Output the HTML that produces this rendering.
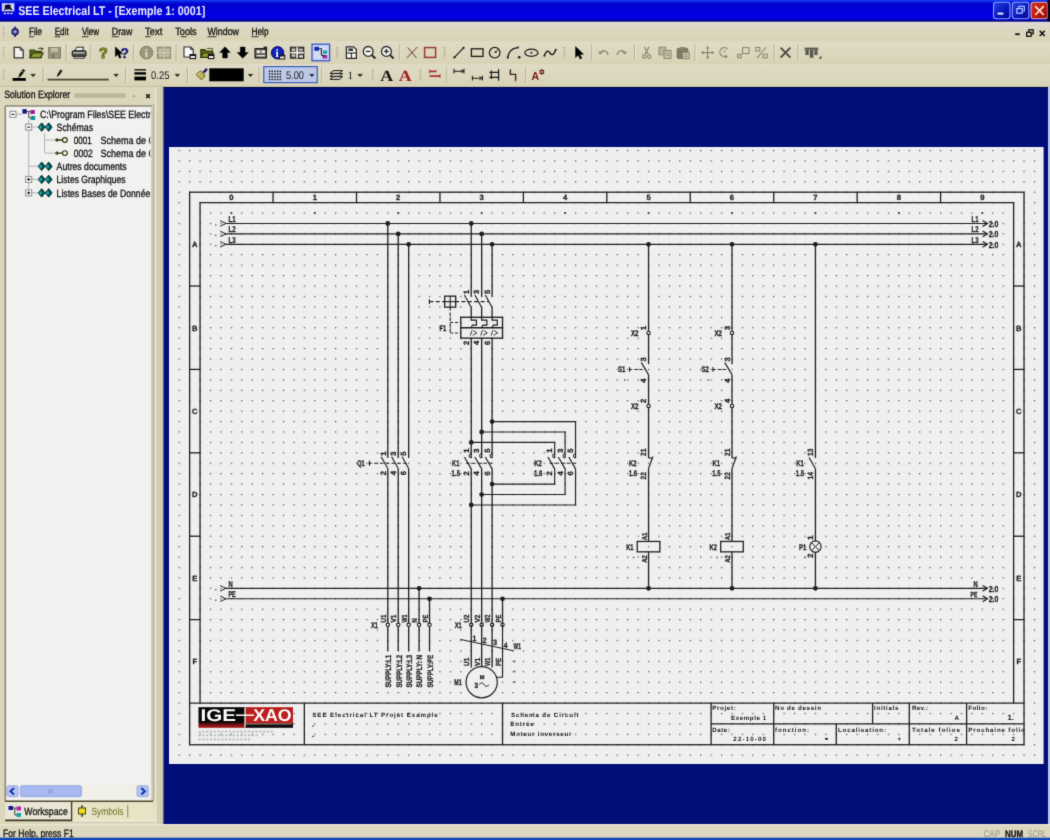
<!DOCTYPE html>
<html><head><meta charset="utf-8"><title>SEE Electrical LT</title>
<style>
html,body{margin:0;padding:0;background:#dbd6bc;overflow:hidden}
svg{display:block;font-family:"Liberation Sans",sans-serif;opacity:.999;will-change:transform}
</style></head><body>
<svg width="1050" height="840" viewBox="0 0 1050 840" text-rendering="geometricPrecision">
<filter id="soft" x="0" y="0" width="100%" height="100%" filterUnits="objectBoundingBox" color-interpolation-filters="sRGB"><feConvolveMatrix order="3" kernelMatrix="0.0144 0.0912 0.0144 0.0912 0.5776 0.0912 0.0144 0.0912 0.0144" divisor="1" edgeMode="duplicate" preserveAlpha="true"/></filter>
<g filter="url(#soft)">
<defs><linearGradient id="tb" x1="0" y1="0" x2="0" y2="1"><stop offset="0" stop-color="#1848f4"/><stop offset="0.09" stop-color="#0818e0"/><stop offset="0.2" stop-color="#0000cc"/><stop offset="0.75" stop-color="#0000e6"/><stop offset="0.9" stop-color="#0000c8"/><stop offset="0.96" stop-color="#000078"/><stop offset="1" stop-color="#000070"/></linearGradient><linearGradient id="bb" x1="0" y1="0" x2="1" y2="1"><stop offset="0" stop-color="#2446e0"/><stop offset="0.55" stop-color="#0818c0"/><stop offset="1" stop-color="#000890"/></linearGradient><linearGradient id="rb" x1="0" y1="0" x2="1" y2="1"><stop offset="0" stop-color="#cc3420"/><stop offset="0.5" stop-color="#c01c0c"/><stop offset="1" stop-color="#8c0c04"/></linearGradient><linearGradient id="mb" x1="0" y1="0" x2="0" y2="1"><stop offset="0" stop-color="#dcdcdc"/><stop offset="0.25" stop-color="#dcd8c4"/><stop offset="1" stop-color="#d9d4b4"/></linearGradient><linearGradient id="tg" x1="0" y1="0" x2="0" y2="1"><stop offset="0" stop-color="#dfdbc6"/><stop offset="1" stop-color="#d8d3b6"/></linearGradient></defs>
<rect x="0.00" y="0.00" width="1050.00" height="840.00" fill="#dbd6bc" />
<rect x="0.00" y="0.00" width="1050.00" height="21.80" fill="url(#tb)" />
<rect x="1.80" y="3.20" width="12.60" height="8.20" fill="#ccd4fc" />
<ellipse cx="8.2" cy="6.6" rx="3.6" ry="2" fill="#0a0a20"/>
<path d="M4.2 9.6 q4 -2.2 8 0" stroke="#0a0a20" stroke-width="1.4" fill="none" />
<rect x="10.60" y="5.40" width="2.60" height="2.20" fill="#e8ecff" />
<rect x="3.80" y="12.60" width="2.20" height="1.60" fill="#e4e8ff" />
<rect x="7.00" y="12.60" width="2.20" height="1.60" fill="#e4e8ff" />
<rect x="10.40" y="12.60" width="2.20" height="1.60" fill="#e4e8ff" />
<rect x="3.40" y="11.60" width="9.60" height="0.90" fill="#1a2a8a" />
<text x="18.20" y="15.00" font-size="12.6" fill="#eef0ff" font-weight="bold" textLength="187.00" lengthAdjust="spacingAndGlyphs" >SEE Electrical LT - [Exemple 1: 0001]</text>
<rect x="993.50" y="2.30" width="16.50" height="16.50" fill="url(#bb)" stroke="#8aa0ff" stroke-width="1.1" rx="2.5"/>
<rect x="1012.30" y="2.30" width="16.50" height="16.50" fill="url(#bb)" stroke="#8aa0ff" stroke-width="1.1" rx="2.5"/>
<rect x="1031.00" y="2.30" width="16.50" height="16.50" fill="url(#rb)" stroke="#e8a8b0" stroke-width="1.1" rx="2.5"/>
<rect x="997.60" y="12.60" width="5.80" height="2.00" fill="#e8ecff" />
<path d="M1018.8 8 v-1.6 h5.6 v4.6 h-1.6" stroke="#a8bcff" stroke-width="1.2" fill="none" />
<rect x="1016.80" y="8.60" width="5.40" height="4.60" fill="none" stroke="#b8c8ff" stroke-width="1.2" />
<path d="M1035.2 6.2 L1043.8 15 M1043.8 6.2 L1035.2 15" stroke="#ffe4dc" stroke-width="1.7" fill="none" />
<rect x="1047.60" y="0.00" width="2.40" height="21.60" fill="#000018" />
<rect x="0.00" y="21.80" width="1050.00" height="19.50" fill="url(#mb)" />
<rect x="2.60" y="26.00" width="2.00" height="1.00" fill="#b8b296" />
<rect x="2.60" y="28.00" width="2.00" height="1.00" fill="#b8b296" />
<rect x="2.60" y="30.00" width="2.00" height="1.00" fill="#b8b296" />
<rect x="2.60" y="32.00" width="2.00" height="1.00" fill="#b8b296" />
<rect x="2.60" y="34.00" width="2.00" height="1.00" fill="#b8b296" />
<rect x="2.60" y="36.00" width="2.00" height="1.00" fill="#b8b296" />
<path d="M15.1 26.4 v2.2 M15.1 34.8 v2.2" stroke="#1e1e66" stroke-width="1.6" fill="none" />
<circle cx="15.10" cy="31.70" r="2.90" fill="#7880d4" stroke="#1e1e66" stroke-width="1.7" />
<circle cx="15.10" cy="31.70" r="0.80" fill="#c8ccf4" />
<text x="29.00" y="35.00" font-size="10.5" fill="#111" textLength="13.00" lengthAdjust="spacingAndGlyphs" stroke="#111" stroke-width="0.3" >File</text>
<rect x="29.00" y="36.30" width="5.00" height="0.90" fill="#222" />
<text x="54.70" y="35.00" font-size="10.5" fill="#111" textLength="14.00" lengthAdjust="spacingAndGlyphs" stroke="#111" stroke-width="0.3" >Edit</text>
<rect x="54.70" y="36.30" width="5.50" height="0.90" fill="#222" />
<text x="81.90" y="35.00" font-size="10.5" fill="#111" textLength="17.20" lengthAdjust="spacingAndGlyphs" stroke="#111" stroke-width="0.3" >View</text>
<rect x="81.90" y="36.30" width="6.50" height="0.90" fill="#222" />
<text x="111.80" y="35.00" font-size="10.5" fill="#111" textLength="20.60" lengthAdjust="spacingAndGlyphs" stroke="#111" stroke-width="0.3" >Draw</text>
<rect x="111.80" y="36.30" width="7.00" height="0.90" fill="#222" />
<text x="145.10" y="35.00" font-size="10.5" fill="#111" textLength="17.20" lengthAdjust="spacingAndGlyphs" stroke="#111" stroke-width="0.3" >Text</text>
<rect x="145.10" y="36.30" width="5.50" height="0.90" fill="#222" />
<text x="175.20" y="35.00" font-size="10.5" fill="#111" textLength="21.50" lengthAdjust="spacingAndGlyphs" stroke="#111" stroke-width="0.3" >Tools</text>
<rect x="181.00" y="36.30" width="5.50" height="0.90" fill="#222" />
<text x="207.50" y="35.00" font-size="10.5" fill="#111" textLength="31.50" lengthAdjust="spacingAndGlyphs" stroke="#111" stroke-width="0.3" >Window</text>
<rect x="207.50" y="36.30" width="9.00" height="0.90" fill="#222" />
<text x="251.50" y="35.00" font-size="10.5" fill="#111" textLength="17.00" lengthAdjust="spacingAndGlyphs" stroke="#111" stroke-width="0.3" >Help</text>
<rect x="251.50" y="36.30" width="7.00" height="0.90" fill="#222" />
<rect x="1015.20" y="33.30" width="4.50" height="1.80" fill="#111" />
<rect x="1028.80" y="29.80" width="4.40" height="4.00" fill="none" stroke="#111" stroke-width="1.3" />
<rect x="1026.70" y="32.30" width="4.40" height="4.00" fill="#dbd6bc" stroke="#111" stroke-width="1.3" />
<path d="M1039.7 30.7 L1044.7 36 M1044.7 30.7 L1039.7 36" stroke="#111" stroke-width="1.6" fill="none" />
<rect x="0.00" y="41.30" width="1050.00" height="22.70" fill="url(#tg)" />
<rect x="0.00" y="64.00" width="1050.00" height="22.50" fill="url(#tg)" />
<line x1="0.00" y1="86.60" x2="1050.00" y2="86.60" stroke="#c4bfa4" stroke-width="1" />
<rect x="2.60" y="47.00" width="2.00" height="1.00" fill="#b8b296" />
<rect x="2.60" y="49.00" width="2.00" height="1.00" fill="#b8b296" />
<rect x="2.60" y="51.00" width="2.00" height="1.00" fill="#b8b296" />
<rect x="2.60" y="53.00" width="2.00" height="1.00" fill="#b8b296" />
<rect x="2.60" y="55.00" width="2.00" height="1.00" fill="#b8b296" />
<rect x="2.60" y="57.00" width="2.00" height="1.00" fill="#b8b296" />
<rect x="2.60" y="69.00" width="2.00" height="1.00" fill="#b8b296" />
<rect x="2.60" y="71.00" width="2.00" height="1.00" fill="#b8b296" />
<rect x="2.60" y="73.00" width="2.00" height="1.00" fill="#b8b296" />
<rect x="2.60" y="75.00" width="2.00" height="1.00" fill="#b8b296" />
<rect x="2.60" y="77.00" width="2.00" height="1.00" fill="#b8b296" />
<rect x="2.60" y="79.00" width="2.00" height="1.00" fill="#b8b296" />
<path d="M14.2 47.3 h6 l3 3 v7.6 h-9 z" stroke="#333" stroke-width="1.3" fill="#f2f2f0" />
<path d="M20.2 47.3 v3 h3" stroke="#3a3a3a" stroke-width="0.9" fill="none" />
<path d="M30 50 h4.5 l1.2 1.4 h5.6 v6.4 h-11.3 z" stroke="#2c3608" stroke-width="1.1" fill="#5e6e1c" />
<path d="M30 57.8 l2.8 -4.8 h10.4 l-2.6 4.8 z" stroke="#2c3608" stroke-width="1.1" fill="#8c9c34" />
<path d="M38.5 48.8 q2.5 -1.8 4 0.6" stroke="#303808" stroke-width="1.1" fill="none" />
<path d="M43.4 47.6 l-0.4 2.6 l-2.2 -1.2 z" stroke="none" stroke-width="0" fill="#303808" />
<rect x="48.60" y="47.50" width="11.80" height="10.60" fill="#9a9680" stroke="#7e7a64" stroke-width="1" />
<rect x="51.00" y="47.80" width="7.00" height="3.80" fill="#c4c0a8" />
<rect x="51.40" y="54.00" width="6.20" height="4.00" fill="#807c66" />
<rect x="55.40" y="54.80" width="1.40" height="2.60" fill="#c4c0a8" />
<line x1="66.30" y1="44.00" x2="66.30" y2="61.00" stroke="#b4ae90" stroke-width="1.1" />
<line x1="67.30" y1="44.00" x2="67.30" y2="61.00" stroke="#ece9d8" stroke-width="0.8" />
<path d="M75 50.8 l1.6 -3.6 h7 l-1 3.6" stroke="#222" stroke-width="1" fill="#f4f4f4" />
<rect x="72.20" y="50.80" width="13.80" height="5.60" fill="#4a4a4a" stroke="#161616" stroke-width="1" rx="1.2"/>
<rect x="73.20" y="52.20" width="11.80" height="1.20" fill="#d8d8d0" />
<path d="M74 56.4 h10.4 v1.8 h-10.4 z" stroke="#222" stroke-width="0.9" fill="#e8e8e0" />
<line x1="91.00" y1="44.00" x2="91.00" y2="61.00" stroke="#b4ae90" stroke-width="1.1" />
<line x1="92.00" y1="44.00" x2="92.00" y2="61.00" stroke="#ece9d8" stroke-width="0.8" />
<text x="99.00" y="58.20" font-size="14.5" fill="#8a8a20" font-weight="bold" textLength="8.70" lengthAdjust="spacingAndGlyphs" stroke="#33330a" stroke-width="0.9" paint-order="stroke">?</text>
<path d="M115.4 47 v9.6 l2.4 -2.2 l1.7 3.8 l1.6 -0.7 l-1.7 -3.7 h3.2 z" stroke="#000" stroke-width="0.6" fill="#000" />
<text x="120.60" y="57.60" font-size="14" fill="#1c1c78" font-weight="bold" textLength="8.40" lengthAdjust="spacingAndGlyphs" stroke="#1c1c78" stroke-width="0.4">?</text>
<line x1="133.70" y1="44.00" x2="133.70" y2="61.00" stroke="#b4ae90" stroke-width="1.1" />
<line x1="134.70" y1="44.00" x2="134.70" y2="61.00" stroke="#ece9d8" stroke-width="0.8" />
<circle cx="146.40" cy="52.60" r="6.40" fill="#9a967c" stroke="#86826a" stroke-width="1" />
<text x="146.40" y="56.80" font-size="11.5" fill="#e8e4cc" font-weight="bold" text-anchor="middle" font-family="Liberation Serif" >i</text>
<rect x="157.40" y="47.20" width="13.20" height="11.00" fill="#aaa68e" stroke="#8a866c" stroke-width="1" />
<line x1="164.00" y1="47.20" x2="164.00" y2="58.20" stroke="#d8d4bc" stroke-width="1.2" />
<line x1="157.40" y1="52.70" x2="170.60" y2="52.70" stroke="#d8d4bc" stroke-width="1.2" />
<rect x="159.00" y="49.00" width="3.20" height="2.20" fill="#c8c4ac" />
<rect x="166.00" y="49.00" width="3.20" height="2.20" fill="#c8c4ac" />
<rect x="159.00" y="54.40" width="3.20" height="2.20" fill="#c8c4ac" />
<rect x="166.00" y="54.40" width="3.20" height="2.20" fill="#c8c4ac" />
<line x1="176.20" y1="44.00" x2="176.20" y2="61.00" stroke="#b4ae90" stroke-width="1.1" />
<line x1="177.20" y1="44.00" x2="177.20" y2="61.00" stroke="#ece9d8" stroke-width="0.8" />
<path d="M184 47 h6.6 l2.6 2.6 v7.4 h-9.2 z" stroke="#2a2a2a" stroke-width="1.1" fill="#fbfbfb" />
<path d="M190.6 47 v2.6 h2.6" stroke="#2a2a2a" stroke-width="0.9" fill="none" />
<rect x="190.00" y="54.60" width="5.60" height="4.00" fill="#f0f0f0" stroke="#111" stroke-width="1.1" />
<rect x="190.00" y="54.60" width="5.60" height="1.40" fill="#111" />
<path d="M200.8 49.6 h4 l1.2 1.4 h6.6 v6.4 h-11.8 z" stroke="#2c3608" stroke-width="1.1" fill="#5e6e1c" />
<path d="M200.8 57.4 l2.4 -4.4 h10 l-2.4 4.4 z" stroke="#2c3608" stroke-width="1.1" fill="#8c9c34" />
<path d="M207 48.4 h5.4 v1.6" stroke="#505a20" stroke-width="1" fill="none" />
<rect x="208.40" y="54.60" width="5.40" height="4.00" fill="#f0f0f0" stroke="#111" stroke-width="1.1" />
<rect x="208.40" y="54.60" width="5.40" height="1.40" fill="#111" />
<path d="M225 46.8 l5.4 5.6 h-3 v5.6 h-4.8 v-5.6 h-3 z" stroke="#000" stroke-width="0.4" fill="#000" />
<path d="M242.7 58.2 l5.6 -5.6 h-3.2 v-5.6 h-4.8 v5.6 h-3.2 z" stroke="#000" stroke-width="0.4" fill="#000" />
<rect x="255.00" y="48.60" width="11.40" height="9.40" fill="#5a5a50" stroke="#1c1c1c" stroke-width="1.1" />
<rect x="256.60" y="50.20" width="3.60" height="3.00" fill="#e8e8e0" />
<rect x="261.40" y="50.20" width="3.60" height="3.00" fill="#e8e8e0" />
<rect x="256.60" y="55.00" width="8.60" height="1.40" fill="#e8e8e0" />
<rect x="263.60" y="46.60" width="3.60" height="3.20" fill="#222" />
<circle cx="277.60" cy="52.80" r="6.20" fill="#1020b8" stroke="#080860" stroke-width="1" />
<text x="277.20" y="57.00" font-size="11.5" fill="#fff" font-weight="bold" text-anchor="middle" font-family="Liberation Serif" >i</text>
<rect x="279.60" y="55.20" width="5.20" height="3.80" fill="#f0f0f0" stroke="#111" stroke-width="1" />
<rect x="279.60" y="55.20" width="5.20" height="1.30" fill="#111" />
<rect x="290.40" y="47.20" width="13.40" height="11.00" fill="#5c5c54" stroke="#1c1c1c" stroke-width="1" />
<line x1="297.10" y1="47.20" x2="297.10" y2="58.20" stroke="#f4f4ec" stroke-width="1.6" />
<line x1="290.40" y1="52.70" x2="303.80" y2="52.70" stroke="#f4f4ec" stroke-width="1.6" />
<rect x="292.00" y="48.80" width="3.00" height="2.00" fill="#d0d0c8" />
<rect x="299.40" y="48.80" width="3.00" height="2.00" fill="#d0d0c8" />
<rect x="292.00" y="54.60" width="3.00" height="2.00" fill="#d0d0c8" />
<rect x="299.40" y="54.60" width="3.00" height="2.00" fill="#d0d0c8" />
<rect x="298.80" y="54.80" width="4.60" height="3.20" fill="#f0f0f0" stroke="#111" stroke-width="0.9" />
<rect x="312.00" y="44.20" width="17.60" height="16.60" fill="#c4d2f0" stroke="#3858c8" stroke-width="1.3" />
<rect x="314.20" y="46.60" width="13.20" height="12.00" fill="#d4dcf4" />
<rect x="314.40" y="46.80" width="4.60" height="4.00" fill="#1828a8" />
<rect x="322.60" y="55.00" width="4.60" height="3.60" fill="#a030b0" />
<path d="M319 48.8 h2.4 v5 q0 2 2 2 h1.6" stroke="#202020" stroke-width="1.1" fill="none" />
<rect x="323.00" y="50.40" width="4.20" height="3.40" fill="#20a0a8" />
<rect x="336.20" y="47.00" width="2.00" height="1.00" fill="#b0aa8c" />
<rect x="336.20" y="49.00" width="2.00" height="1.00" fill="#b0aa8c" />
<rect x="336.20" y="51.00" width="2.00" height="1.00" fill="#b0aa8c" />
<rect x="336.20" y="53.00" width="2.00" height="1.00" fill="#b0aa8c" />
<rect x="336.20" y="55.00" width="2.00" height="1.00" fill="#b0aa8c" />
<rect x="336.20" y="57.00" width="2.00" height="1.00" fill="#b0aa8c" />
<path d="M346.4 46.8 h7.2 l2.8 2.8 v8.8 h-10 z" stroke="#262626" stroke-width="1.2" fill="#f4f4f0" />
<rect x="348.40" y="48.40" width="4.60" height="2.60" fill="#333" />
<line x1="346.40" y1="53.00" x2="356.40" y2="53.00" stroke="#262626" stroke-width="1.1" />
<line x1="351.40" y1="53.00" x2="351.40" y2="58.40" stroke="#262626" stroke-width="1.1" />
<circle cx="368.20" cy="51.40" r="4.90" fill="#f4f4f0" stroke="#262626" stroke-width="1.3" />
<line x1="365.80" y1="51.40" x2="370.60" y2="51.40" stroke="#262626" stroke-width="1.3" />
<line x1="371.80" y1="55.00" x2="375.40" y2="58.40" stroke="#262626" stroke-width="2" />
<circle cx="386.40" cy="51.40" r="4.90" fill="#f4f4f0" stroke="#262626" stroke-width="1.3" />
<line x1="384.00" y1="51.40" x2="388.80" y2="51.40" stroke="#262626" stroke-width="1.3" />
<line x1="386.40" y1="49.00" x2="386.40" y2="53.80" stroke="#262626" stroke-width="1.3" />
<line x1="390.00" y1="55.00" x2="393.60" y2="58.40" stroke="#262626" stroke-width="2" />
<line x1="399.80" y1="44.00" x2="399.80" y2="61.00" stroke="#b4ae90" stroke-width="1.1" />
<line x1="400.80" y1="44.00" x2="400.80" y2="61.00" stroke="#ece9d8" stroke-width="0.8" />
<path d="M407 57.8 L417.4 47 M407.6 47.4 L416.6 58" stroke="#6a3a30" stroke-width="1" fill="none" />
<rect x="424.60" y="47.60" width="11.00" height="9.80" fill="none" stroke="#9a3a32" stroke-width="1.5" />
<rect x="443.60" y="47.00" width="2.00" height="1.00" fill="#b0aa8c" />
<rect x="443.60" y="49.00" width="2.00" height="1.00" fill="#b0aa8c" />
<rect x="443.60" y="51.00" width="2.00" height="1.00" fill="#b0aa8c" />
<rect x="443.60" y="53.00" width="2.00" height="1.00" fill="#b0aa8c" />
<rect x="443.60" y="55.00" width="2.00" height="1.00" fill="#b0aa8c" />
<rect x="443.60" y="57.00" width="2.00" height="1.00" fill="#b0aa8c" />
<line x1="454.40" y1="57.40" x2="463.60" y2="47.80" stroke="#1a1a1a" stroke-width="1.2" />
<circle cx="454.40" cy="57.40" r="1.10" fill="#1a1a1a" />
<circle cx="463.60" cy="47.80" r="1.10" fill="#1a1a1a" />
<rect x="471.40" y="48.80" width="11.60" height="7.60" fill="none" stroke="#1a1a1a" stroke-width="1.3" />
<circle cx="494.70" cy="52.70" r="5.30" fill="none" stroke="#1a1a1a" stroke-width="1.2" />
<circle cx="495.60" cy="52.00" r="1.00" fill="#1a1a1a" />
<line x1="495.60" y1="52.00" x2="498.00" y2="49.60" stroke="#1a1a1a" stroke-width="0.9" />
<path d="M507.8 57.6 q1 -9 9.8 -10" stroke="#1a1a1a" stroke-width="1.4" fill="none" />
<circle cx="507.80" cy="57.60" r="1.10" fill="#1a1a1a" />
<circle cx="519.20" cy="57.20" r="1.30" fill="#1a1a1a" />
<circle cx="518.00" cy="47.60" r="1.00" fill="#1a1a1a" />
<ellipse cx="531.4" cy="52.8" rx="6.6" ry="3.6" fill="none" stroke="#1a1a1a" stroke-width="1.2"/>
<circle cx="531.40" cy="52.80" r="1.00" fill="#1a1a1a" />
<path d="M544.4 55.6 q2.4 -7 5.6 -2.6 t5.6 -3" stroke="#1a1a1a" stroke-width="1.4" fill="none" />
<circle cx="544.40" cy="55.80" r="1.00" fill="#1a1a1a" />
<circle cx="555.80" cy="49.80" r="1.00" fill="#1a1a1a" />
<rect x="563.40" y="47.00" width="2.00" height="1.00" fill="#b0aa8c" />
<rect x="563.40" y="49.00" width="2.00" height="1.00" fill="#b0aa8c" />
<rect x="563.40" y="51.00" width="2.00" height="1.00" fill="#b0aa8c" />
<rect x="563.40" y="53.00" width="2.00" height="1.00" fill="#b0aa8c" />
<rect x="563.40" y="55.00" width="2.00" height="1.00" fill="#b0aa8c" />
<rect x="563.40" y="57.00" width="2.00" height="1.00" fill="#b0aa8c" />
<path d="M575.6 46.6 v11 l2.6 -2.6 l1.9 4 l1.7 -0.8 l-1.9 -3.9 h3.6 z" stroke="#000" stroke-width="0.5" fill="#000" />
<line x1="591.80" y1="44.00" x2="591.80" y2="61.00" stroke="#b4ae90" stroke-width="1.1" />
<line x1="592.80" y1="44.00" x2="592.80" y2="61.00" stroke="#ece9d8" stroke-width="0.8" />
<path d="M600.4 53.6 q1.6 -3.6 5 -2.6 q2.6 1 2.4 4" stroke="#8a8670" stroke-width="1.3" fill="none" />
<path d="M598.6 51 l1 3.6 l3.2 -1.6 z" stroke="none" stroke-width="0" fill="#8a8670" />
<path d="M624.8 53.6 q-1.6 -3.6 -5 -2.6 q-2.6 1 -2.4 4" stroke="#8a8670" stroke-width="1.3" fill="none" />
<path d="M626.6 51 l-1 3.6 l-3.2 -1.6 z" stroke="none" stroke-width="0" fill="#8a8670" />
<line x1="634.60" y1="44.00" x2="634.60" y2="61.00" stroke="#b4ae90" stroke-width="1.1" />
<line x1="635.60" y1="44.00" x2="635.60" y2="61.00" stroke="#ece9d8" stroke-width="0.8" />
<path d="M644.2 46.8 L648.4 54.6 M649 46.8 L644.8 54.6" stroke="#8a8670" stroke-width="1.2" fill="none" />
<circle cx="644.20" cy="56.40" r="1.70" fill="none" stroke="#8a8670" stroke-width="1.1" />
<circle cx="649.20" cy="56.40" r="1.70" fill="none" stroke="#8a8670" stroke-width="1.1" />
<rect x="659.00" y="47.20" width="6.60" height="7.60" fill="#b8b4a0" stroke="#8a8670" stroke-width="1" />
<rect x="664.00" y="50.40" width="7.00" height="8.00" fill="#c8c4b0" stroke="#8a8670" stroke-width="1" />
<line x1="665.40" y1="53.00" x2="669.60" y2="53.00" stroke="#8a8670" stroke-width="0.8" />
<line x1="665.40" y1="55.20" x2="669.60" y2="55.20" stroke="#8a8670" stroke-width="0.8" />
<rect x="677.20" y="48.40" width="10.60" height="10.00" fill="#7e7a66" stroke="#726e5a" stroke-width="1" rx="1"/>
<rect x="680.20" y="47.00" width="4.60" height="2.60" fill="#8a8670" />
<rect x="682.60" y="52.40" width="6.60" height="6.40" fill="#cfcbb6" stroke="#8a8670" stroke-width="1" />
<line x1="684.00" y1="54.60" x2="688.00" y2="54.60" stroke="#8a8670" stroke-width="0.8" />
<line x1="684.00" y1="56.60" x2="688.00" y2="56.60" stroke="#8a8670" stroke-width="0.8" />
<line x1="695.00" y1="44.00" x2="695.00" y2="61.00" stroke="#b4ae90" stroke-width="1.1" />
<line x1="696.00" y1="44.00" x2="696.00" y2="61.00" stroke="#ece9d8" stroke-width="0.8" />
<path d="M707.6 46.6 v12 M701.6 52.6 h12" stroke="#8a8670" stroke-width="1.1" fill="none" />
<path d="M707.6 46 l-1.8 2.4 h3.6 z M707.6 59.2 l-1.8 -2.4 h3.6 z M701 52.6 l2.4 -1.8 v3.6 z M714.2 52.6 l-2.4 -1.8 v3.6 z" stroke="none" stroke-width="0" fill="#8a8670" />
<path d="M727.6 49.2 a4.4 4.4 0 1 0 -1 6.6" stroke="#8a8670" stroke-width="1.2" fill="none" />
<path d="M724.6 58.4 l0.6 -3.4 l2.8 1.8 z" stroke="none" stroke-width="0" fill="#8a8670" />
<circle cx="724.60" cy="51.40" r="0.90" fill="#8a8670" />
<rect x="737.80" y="54.40" width="3.40" height="3.40" fill="none" stroke="#8a8670" stroke-width="1.1" />
<rect x="742.60" y="47.60" width="6.40" height="6.00" fill="none" stroke="#8a8670" stroke-width="1.1" />
<rect x="755.80" y="47.40" width="4.00" height="3.60" fill="none" stroke="#8a8670" stroke-width="1.1" />
<rect x="763.20" y="54.20" width="4.00" height="3.60" fill="none" stroke="#8a8670" stroke-width="1.1" />
<line x1="757.00" y1="58.20" x2="766.40" y2="47.00" stroke="#8a8670" stroke-width="1.1" />
<line x1="774.20" y1="44.00" x2="774.20" y2="61.00" stroke="#b4ae90" stroke-width="1.1" />
<line x1="775.20" y1="44.00" x2="775.20" y2="61.00" stroke="#ece9d8" stroke-width="0.8" />
<path d="M780.6 47.6 L790.4 57.6 M790.4 47.6 L780.6 57.6" stroke="#4a4a40" stroke-width="1.9" fill="none" />
<line x1="798.10" y1="44.00" x2="798.10" y2="61.00" stroke="#b4ae90" stroke-width="1.1" />
<line x1="799.10" y1="44.00" x2="799.10" y2="61.00" stroke="#ece9d8" stroke-width="0.8" />
<rect x="804.60" y="47.60" width="13.60" height="2.20" fill="#5a5a50" />
<rect x="805.40" y="49.80" width="3.40" height="5.20" fill="#5a5a50" />
<rect x="809.80" y="49.80" width="3.60" height="8.00" fill="#5a5a50" />
<rect x="814.40" y="49.80" width="3.20" height="5.20" fill="#5a5a50" />
<path d="M821.4 56 v2.6 h-2.6 z" stroke="none" stroke-width="0" fill="#111" />
<rect x="12.60" y="78.00" width="13.20" height="2.80" fill="#000" />
<path d="M18.6 77.6 l1 -3.4 l3.4 -5 l1.8 1.2 l-3.4 5 z" stroke="#000" stroke-width="0.5" fill="#111" />
<path d="M21.6 71 l1.6 1.1" stroke="#ddd" stroke-width="0.7" fill="none" />
<path d="M30.8 74.2 h4.6 l-2.3 2.6 z" stroke="#1a1a1a" stroke-width="0.4" fill="#1a1a1a" />
<line x1="43.30" y1="67.00" x2="43.30" y2="83.00" stroke="#b4ae90" stroke-width="1.1" />
<line x1="44.30" y1="67.00" x2="44.30" y2="83.00" stroke="#ece9d8" stroke-width="0.8" />
<line x1="47.60" y1="79.60" x2="108.80" y2="79.60" stroke="#48463a" stroke-width="1.8" />
<path d="M57.2 76.6 l0.8 -2.8 l2.6 -4 l1.6 1 l-2.6 4 z" stroke="#000" stroke-width="0.5" fill="#222" />
<path d="M113.8 74.2 h4.6 l-2.3 2.6 z" stroke="#1a1a1a" stroke-width="0.4" fill="#1a1a1a" />
<line x1="125.70" y1="67.00" x2="125.70" y2="83.00" stroke="#b4ae90" stroke-width="1.1" />
<line x1="126.70" y1="67.00" x2="126.70" y2="83.00" stroke="#ece9d8" stroke-width="0.8" />
<rect x="134.40" y="69.20" width="11.60" height="1.30" fill="#000" />
<rect x="134.40" y="72.20" width="11.60" height="2.40" fill="#000" />
<rect x="134.40" y="76.60" width="11.60" height="3.80" fill="#000" />
<text x="151.00" y="79.20" font-size="11" fill="#222" textLength="18.60" lengthAdjust="spacingAndGlyphs" >0.25</text>
<path d="M175.0 74.2 h4.6 l-2.3 2.6 z" stroke="#1a1a1a" stroke-width="0.4" fill="#1a1a1a" />
<line x1="187.40" y1="67.00" x2="187.40" y2="83.00" stroke="#b4ae90" stroke-width="1.1" />
<line x1="188.40" y1="67.00" x2="188.40" y2="83.00" stroke="#ece9d8" stroke-width="0.8" />
<path d="M196.2 74.4 l4.4 -3.6 l4.6 5.4 l-4 3.6 z" stroke="#5a5a18" stroke-width="1" fill="#d8d070" />
<path d="M198.2 76.6 l4.2 -3.6 M199.8 78.4 l4.2 -3.6" stroke="#6a6a20" stroke-width="0.8" fill="none" />
<path d="M203.4 72.6 l3.6 -3.8" stroke="#181860" stroke-width="2.4" fill="none" />
<rect x="209.30" y="68.30" width="34.40" height="13.00" fill="#000" />
<path d="M248.2 74.2 h4.6 l-2.3 2.6 z" stroke="#1a1a1a" stroke-width="0.4" fill="#1a1a1a" />
<line x1="259.20" y1="67.00" x2="259.20" y2="83.00" stroke="#b4ae90" stroke-width="1.1" />
<line x1="260.20" y1="67.00" x2="260.20" y2="83.00" stroke="#ece9d8" stroke-width="0.8" />
<rect x="263.80" y="66.60" width="53.40" height="16.00" fill="#bccae8" stroke="#3c5cc0" stroke-width="1.2" />
<rect x="268.80" y="70.60" width="1.50" height="1.50" fill="#1a1a1a" />
<rect x="268.80" y="73.30" width="1.50" height="1.50" fill="#1a1a1a" />
<rect x="268.80" y="76.00" width="1.50" height="1.50" fill="#1a1a1a" />
<rect x="268.80" y="78.70" width="1.50" height="1.50" fill="#1a1a1a" />
<rect x="271.50" y="70.60" width="1.50" height="1.50" fill="#1a1a1a" />
<rect x="271.50" y="73.30" width="1.50" height="1.50" fill="#1a1a1a" />
<rect x="271.50" y="76.00" width="1.50" height="1.50" fill="#1a1a1a" />
<rect x="271.50" y="78.70" width="1.50" height="1.50" fill="#1a1a1a" />
<rect x="274.20" y="70.60" width="1.50" height="1.50" fill="#1a1a1a" />
<rect x="274.20" y="73.30" width="1.50" height="1.50" fill="#1a1a1a" />
<rect x="274.20" y="76.00" width="1.50" height="1.50" fill="#1a1a1a" />
<rect x="274.20" y="78.70" width="1.50" height="1.50" fill="#1a1a1a" />
<rect x="276.90" y="70.60" width="1.50" height="1.50" fill="#1a1a1a" />
<rect x="276.90" y="73.30" width="1.50" height="1.50" fill="#1a1a1a" />
<rect x="276.90" y="76.00" width="1.50" height="1.50" fill="#1a1a1a" />
<rect x="276.90" y="78.70" width="1.50" height="1.50" fill="#1a1a1a" />
<rect x="279.60" y="70.60" width="1.50" height="1.50" fill="#1a1a1a" />
<rect x="279.60" y="73.30" width="1.50" height="1.50" fill="#1a1a1a" />
<rect x="279.60" y="76.00" width="1.50" height="1.50" fill="#1a1a1a" />
<rect x="279.60" y="78.70" width="1.50" height="1.50" fill="#1a1a1a" />
<text x="286.00" y="79.20" font-size="11" fill="#1a1a1a" textLength="18.00" lengthAdjust="spacingAndGlyphs" >5.00</text>
<path d="M309.6 74.2 h4.6 l-2.3 2.6 z" stroke="#1a1a1a" stroke-width="0.4" fill="#1a1a1a" />
<line x1="321.80" y1="67.00" x2="321.80" y2="83.00" stroke="#b4ae90" stroke-width="1.1" />
<line x1="322.80" y1="67.00" x2="322.80" y2="83.00" stroke="#ece9d8" stroke-width="0.8" />
<path d="M330 73.4 l3.4 -2.8 h9.2 l-3.4 2.8 z" stroke="#1a1a1a" stroke-width="1" fill="#d8d4bc" />
<path d="M330 76.4 l3.4 -2.8 h9.2 l-3.4 2.8 z" stroke="#1a1a1a" stroke-width="1" fill="#d8d4bc" />
<path d="M330 79.4 l3.4 -2.8 h9.2 l-3.4 2.8 z" stroke="#1a1a1a" stroke-width="1" fill="#d8d4bc" />
<text x="347.60" y="79.20" font-size="11" fill="#1a1a1a" font-family="Liberation Serif" >1</text>
<path d="M357.8 74.2 h4.6 l-2.3 2.6 z" stroke="#1a1a1a" stroke-width="0.4" fill="#1a1a1a" />
<rect x="371.60" y="69.00" width="2.00" height="1.00" fill="#b0aa8c" />
<rect x="371.60" y="71.00" width="2.00" height="1.00" fill="#b0aa8c" />
<rect x="371.60" y="73.00" width="2.00" height="1.00" fill="#b0aa8c" />
<rect x="371.60" y="75.00" width="2.00" height="1.00" fill="#b0aa8c" />
<rect x="371.60" y="77.00" width="2.00" height="1.00" fill="#b0aa8c" />
<rect x="371.60" y="79.00" width="2.00" height="1.00" fill="#b0aa8c" />
<text x="380.20" y="80.60" font-size="15.5" fill="#1a1212" font-weight="bold" textLength="13.00" lengthAdjust="spacingAndGlyphs" font-family="Liberation Serif" >A</text>
<text x="398.80" y="80.60" font-size="15.5" fill="#a01c1c" font-weight="bold" textLength="13.00" lengthAdjust="spacingAndGlyphs" font-family="Liberation Serif" >A</text>
<rect x="419.40" y="69.00" width="2.00" height="1.00" fill="#b0aa8c" />
<rect x="419.40" y="71.00" width="2.00" height="1.00" fill="#b0aa8c" />
<rect x="419.40" y="73.00" width="2.00" height="1.00" fill="#b0aa8c" />
<rect x="419.40" y="75.00" width="2.00" height="1.00" fill="#b0aa8c" />
<rect x="419.40" y="77.00" width="2.00" height="1.00" fill="#b0aa8c" />
<rect x="419.40" y="79.00" width="2.00" height="1.00" fill="#b0aa8c" />
<path d="M429.6 71.4 h7 M429.6 76.2 h10.4" stroke="#a83030" stroke-width="1.7" fill="none" />
<path d="M429.6 73.6 v-4 M440 74 v4" stroke="#a83030" stroke-width="0.9" fill="none" />
<line x1="446.80" y1="67.00" x2="446.80" y2="83.00" stroke="#b4ae90" stroke-width="1.1" />
<line x1="447.80" y1="67.00" x2="447.80" y2="83.00" stroke="#ece9d8" stroke-width="0.8" />
<path d="M454 71.2 h10 M454 68.8 v4.8 M464 68.8 v4.8" stroke="#1a1a1a" stroke-width="1.1" fill="none" />
<path d="M461 69.6 l2.6 1.6 l-2.6 1.6" stroke="#1a1a1a" stroke-width="0.9" fill="none" />
<path d="M472.4 78.2 h10 M472.4 75.8 v4.8 M482.4 75.8 v4.8" stroke="#1a1a1a" stroke-width="1.1" fill="none" />
<path d="M479.4 76.6 l2.6 1.6 l-2.6 1.6" stroke="#1a1a1a" stroke-width="0.9" fill="none" />
<path d="M489.4 72.4 h9.6 M489.4 77.4 h9.6 M498.6 69.2 v11.6 M491.4 70.4 v8.6" stroke="#1a1a1a" stroke-width="1.2" fill="none" />
<path d="M510.4 69.6 v4.8 h5.2 v5.6" stroke="#3a2020" stroke-width="1.4" fill="none" />
<circle cx="515.60" cy="80.40" r="0.90" fill="#a83030" />
<line x1="525.80" y1="67.00" x2="525.80" y2="83.00" stroke="#b4ae90" stroke-width="1.1" />
<line x1="526.80" y1="67.00" x2="526.80" y2="83.00" stroke="#ece9d8" stroke-width="0.8" />
<text x="531.40" y="80.20" font-size="11.5" fill="#7a1414" font-weight="bold" textLength="7.60" lengthAdjust="spacingAndGlyphs" >A</text>
<rect x="540.00" y="70.40" width="3.60" height="3.00" fill="none" stroke="#7a1414" stroke-width="1" />
<line x1="541.80" y1="69.00" x2="541.80" y2="75.00" stroke="#7a1414" stroke-width="0.9" />
<rect x="0.00" y="87.00" width="163.50" height="738.00" fill="#dbd6bc" />
<text x="4.20" y="98.30" font-size="10.5" fill="#111" textLength="66.00" lengthAdjust="spacingAndGlyphs" stroke="#111" stroke-width="0.3" >Solution Explorer</text>
<rect x="74.30" y="93.20" width="51.50" height="4.60" fill="#bdb89c" />
<path d="M132.4 96.8 l1.5 -2 l1.5 2 z" stroke="#a8a48a" stroke-width="0.4" fill="#a8a48a" />
<path d="M146.2 94.2 L149.8 98 M149.8 94.2 L146.2 98" stroke="#111" stroke-width="1.5" fill="none" />
<line x1="155.80" y1="88.00" x2="155.80" y2="824.00" stroke="#f4f2e4" stroke-width="1" />
<rect x="156.50" y="88.00" width="6.50" height="736.00" fill="#d4cfb4" />
<line x1="163.00" y1="87.00" x2="163.00" y2="824.00" stroke="#a8a48c" stroke-width="1" />
<rect x="5.00" y="106.00" width="147.00" height="695.00" fill="#f1f1ef" />
<line x1="5.00" y1="106.00" x2="152.00" y2="106.00" stroke="#8c8870" stroke-width="1.6" />
<line x1="5.30" y1="106.00" x2="5.30" y2="801.00" stroke="#8c8870" stroke-width="1.6" />
<line x1="151.80" y1="106.00" x2="151.80" y2="801.00" stroke="#c8c4ac" stroke-width="1.2" />
<line x1="153.60" y1="104.00" x2="153.60" y2="801.00" stroke="#a8a48c" stroke-width="1" />
<line x1="16.00" y1="114.30" x2="22.00" y2="114.30" stroke="#b4b4b4" stroke-width="1" />
<line x1="28.70" y1="120.00" x2="28.70" y2="193.00" stroke="#b4b4b4" stroke-width="1" />
<line x1="31.50" y1="127.10" x2="38.00" y2="127.10" stroke="#b4b4b4" stroke-width="1" />
<line x1="44.50" y1="133.00" x2="44.50" y2="153.00" stroke="#b4b4b4" stroke-width="1" />
<line x1="44.50" y1="140.00" x2="55.00" y2="140.00" stroke="#b4b4b4" stroke-width="1" />
<line x1="44.50" y1="153.10" x2="55.00" y2="153.10" stroke="#b4b4b4" stroke-width="1" />
<line x1="28.70" y1="166.30" x2="38.00" y2="166.30" stroke="#b4b4b4" stroke-width="1" />
<line x1="31.50" y1="179.40" x2="38.00" y2="179.40" stroke="#b4b4b4" stroke-width="1" />
<line x1="31.50" y1="192.90" x2="38.00" y2="192.90" stroke="#b4b4b4" stroke-width="1" />
<rect x="10.00" y="111.30" width="6.00" height="6.00" fill="#fff" stroke="#8a8a8a" stroke-width="1" />
<line x1="11.50" y1="114.30" x2="14.50" y2="114.30" stroke="#000" stroke-width="1" />
<rect x="22.40" y="109.20" width="4.40" height="4.40" fill="#12127c" />
<rect x="30.40" y="110.00" width="4.40" height="4.00" fill="#981c98" />
<rect x="30.80" y="116.00" width="4.40" height="4.00" fill="#109494" />
<path d="M27 111.5 h3 M28.8 111.5 v6.5 h2" stroke="#444" stroke-width="1" fill="none" />
<clipPath id="tc"><rect x="5" y="106" width="145.3" height="695"/></clipPath>
<g clip-path="url(#tc)">
<text x="40.00" y="118.20" font-size="10.5" fill="#111" textLength="124.00" lengthAdjust="spacingAndGlyphs" stroke="#111" stroke-width="0.3" >C:\Program Files\SEE Electrical</text>
<rect x="25.70" y="124.10" width="6.00" height="6.00" fill="#fff" stroke="#8a8a8a" stroke-width="1" />
<line x1="27.20" y1="127.10" x2="30.20" y2="127.10" stroke="#000" stroke-width="1" />
<path d="M38.3 127.1 l3.4 -4.2 l3.4 4.2 l-3.4 4.2 z" stroke="#022424" stroke-width="1" fill="#12a4a4" />
<path d="M40.5 124.5 l1.2 -1.6 l3.4 4.2 l-3.4 4.2 l-1.2 -1.6 l2 -2.6 z" stroke="none" stroke-width="0" fill="#044848" />
<path d="M45.3 127.1 l3.4 -4.2 l3.4 4.2 l-3.4 4.2 z" stroke="#022424" stroke-width="1" fill="#12a4a4" />
<path d="M47.5 124.5 l1.2 -1.6 l3.4 4.2 l-3.4 4.2 l-1.2 -1.6 l2 -2.6 z" stroke="none" stroke-width="0" fill="#044848" />
<text x="56.60" y="131.00" font-size="10.5" fill="#111" textLength="36.50" lengthAdjust="spacingAndGlyphs" stroke="#111" stroke-width="0.3" >Schémas</text>
<line x1="56.30" y1="140.00" x2="62.30" y2="140.00" stroke="#34340c" stroke-width="1.4" />
<circle cx="56.90" cy="140.00" r="1.30" fill="#5a5a18" stroke="#2a2a08" stroke-width="0.7" />
<circle cx="64.90" cy="140.00" r="2.40" fill="#f4f4e4" stroke="#34340c" stroke-width="1.15" />
<text x="73.70" y="143.90" font-size="10.5" fill="#111" textLength="18.00" lengthAdjust="spacingAndGlyphs" stroke="#111" stroke-width="0.3" >0001</text>
<text x="100.60" y="143.90" font-size="10.5" fill="#111" textLength="73.50" lengthAdjust="spacingAndGlyphs" stroke="#111" stroke-width="0.3" >Schema de Circuit</text>
<line x1="56.30" y1="153.10" x2="62.30" y2="153.10" stroke="#34340c" stroke-width="1.4" />
<circle cx="56.90" cy="153.10" r="1.30" fill="#5a5a18" stroke="#2a2a08" stroke-width="0.7" />
<circle cx="64.90" cy="153.10" r="2.40" fill="#f4f4e4" stroke="#34340c" stroke-width="1.15" />
<text x="73.70" y="157.00" font-size="10.5" fill="#111" textLength="19.00" lengthAdjust="spacingAndGlyphs" stroke="#111" stroke-width="0.3" >0002</text>
<text x="100.60" y="157.00" font-size="10.5" fill="#111" textLength="73.50" lengthAdjust="spacingAndGlyphs" stroke="#111" stroke-width="0.3" >Schema de Circuit</text>
<path d="M38.3 166.3 l3.4 -4.2 l3.4 4.2 l-3.4 4.2 z" stroke="#022424" stroke-width="1" fill="#12a4a4" />
<path d="M40.5 163.7 l1.2 -1.6 l3.4 4.2 l-3.4 4.2 l-1.2 -1.6 l2 -2.6 z" stroke="none" stroke-width="0" fill="#044848" />
<path d="M45.3 166.3 l3.4 -4.2 l3.4 4.2 l-3.4 4.2 z" stroke="#022424" stroke-width="1" fill="#12a4a4" />
<path d="M47.5 163.7 l1.2 -1.6 l3.4 4.2 l-3.4 4.2 l-1.2 -1.6 l2 -2.6 z" stroke="none" stroke-width="0" fill="#044848" />
<text x="56.60" y="170.20" font-size="10.5" fill="#111" textLength="70.00" lengthAdjust="spacingAndGlyphs" stroke="#111" stroke-width="0.3" >Autres documents</text>
<rect x="25.70" y="176.40" width="6.00" height="6.00" fill="#fff" stroke="#8a8a8a" stroke-width="1" />
<line x1="27.20" y1="179.40" x2="30.20" y2="179.40" stroke="#000" stroke-width="1" />
<line x1="28.70" y1="177.90" x2="28.70" y2="180.90" stroke="#000" stroke-width="1" />
<path d="M38.3 179.4 l3.4 -4.2 l3.4 4.2 l-3.4 4.2 z" stroke="#022424" stroke-width="1" fill="#12a4a4" />
<path d="M40.5 176.8 l1.2 -1.6 l3.4 4.2 l-3.4 4.2 l-1.2 -1.6 l2 -2.6 z" stroke="none" stroke-width="0" fill="#044848" />
<path d="M45.3 179.4 l3.4 -4.2 l3.4 4.2 l-3.4 4.2 z" stroke="#022424" stroke-width="1" fill="#12a4a4" />
<path d="M47.5 176.8 l1.2 -1.6 l3.4 4.2 l-3.4 4.2 l-1.2 -1.6 l2 -2.6 z" stroke="none" stroke-width="0" fill="#044848" />
<text x="56.60" y="183.30" font-size="10.5" fill="#111" textLength="69.00" lengthAdjust="spacingAndGlyphs" stroke="#111" stroke-width="0.3" >Listes Graphiques</text>
<rect x="25.70" y="189.90" width="6.00" height="6.00" fill="#fff" stroke="#8a8a8a" stroke-width="1" />
<line x1="27.20" y1="192.90" x2="30.20" y2="192.90" stroke="#000" stroke-width="1" />
<line x1="28.70" y1="191.40" x2="28.70" y2="194.40" stroke="#000" stroke-width="1" />
<path d="M38.3 192.9 l3.4 -4.2 l3.4 4.2 l-3.4 4.2 z" stroke="#022424" stroke-width="1" fill="#12a4a4" />
<path d="M40.5 190.3 l1.2 -1.6 l3.4 4.2 l-3.4 4.2 l-1.2 -1.6 l2 -2.6 z" stroke="none" stroke-width="0" fill="#044848" />
<path d="M45.3 192.9 l3.4 -4.2 l3.4 4.2 l-3.4 4.2 z" stroke="#022424" stroke-width="1" fill="#12a4a4" />
<path d="M47.5 190.3 l1.2 -1.6 l3.4 4.2 l-3.4 4.2 l-1.2 -1.6 l2 -2.6 z" stroke="none" stroke-width="0" fill="#044848" />
<text x="56.60" y="196.80" font-size="10.5" fill="#111" textLength="98.00" lengthAdjust="spacingAndGlyphs" stroke="#111" stroke-width="0.3" >Listes Bases de Données</text>
</g>
<rect x="6.20" y="784.50" width="145.00" height="13.50" fill="#f0efe8" />
<rect x="6.90" y="785.80" width="11.20" height="10.80" fill="#b4c4f0" stroke="#98a8e0" stroke-width="1" rx="1.5"/>
<path d="M14 788 L10.5 791.2 L14 794.4" stroke="#1030b0" stroke-width="2" fill="none" />
<rect x="137.00" y="785.80" width="11.20" height="10.80" fill="#b4c4f0" stroke="#98a8e0" stroke-width="1" rx="1.5"/>
<path d="M141.3 788 L144.8 791.2 L141.3 794.4" stroke="#1030b0" stroke-width="2" fill="none" />
<rect x="20.60" y="785.80" width="60.80" height="10.80" fill="#a8baf0" stroke="#90a4e4" stroke-width="1" rx="1.5"/>
<line x1="48.50" y1="789.00" x2="48.50" y2="793.50" stroke="#8898d8" stroke-width="1" />
<line x1="50.50" y1="789.00" x2="50.50" y2="793.50" stroke="#8898d8" stroke-width="1" />
<line x1="52.50" y1="789.00" x2="52.50" y2="793.50" stroke="#8898d8" stroke-width="1" />
<line x1="5.00" y1="801.30" x2="153.00" y2="801.30" stroke="#50492c" stroke-width="1.6" />
<rect x="5.20" y="802.00" width="66.50" height="18.00" fill="#e9e6d6" />
<line x1="5.20" y1="820.40" x2="72.00" y2="820.40" stroke="#3c3824" stroke-width="1.6" />
<line x1="71.70" y1="802.00" x2="71.70" y2="821.00" stroke="#3c3824" stroke-width="1.6" />
<rect x="72.50" y="802.50" width="82.00" height="17.50" fill="#e8e3c4" />
<line x1="72.50" y1="820.60" x2="155.00" y2="820.60" stroke="#f6f4e8" stroke-width="1" />
<rect x="8.50" y="806.00" width="4.50" height="4.00" fill="#1a1a8a" />
<rect x="16.50" y="806.50" width="4.50" height="4.00" fill="#b020b0" />
<rect x="16.50" y="813.00" width="4.50" height="4.00" fill="#18a8a8" />
<path d="M13 808 h3.5 M14.8 808 v7 h2" stroke="#444" stroke-width="1" fill="none" />
<text x="24.30" y="815.00" font-size="10.5" fill="#111" textLength="43.50" lengthAdjust="spacingAndGlyphs" stroke="#111" stroke-width="0.3" >Workspace</text>
<rect x="78.50" y="808.00" width="7.00" height="6.00" fill="#e8e020" stroke="#4a4a10" stroke-width="1" />
<line x1="82.00" y1="805.30" x2="82.00" y2="808.00" stroke="#222" stroke-width="1.4" />
<line x1="82.00" y1="814.00" x2="82.00" y2="816.80" stroke="#222" stroke-width="1.4" />
<text x="91.50" y="815.00" font-size="10.5" fill="#6a6a28" textLength="32.00" lengthAdjust="spacingAndGlyphs" >Symbols</text>
<line x1="127.70" y1="805.00" x2="127.70" y2="817.50" stroke="#9a9468" stroke-width="1.2" />
<rect x="0.00" y="824.60" width="1050.00" height="13.20" fill="#dcd7be" />
<line x1="0.00" y1="824.80" x2="1050.00" y2="824.80" stroke="#eeecdc" stroke-width="1" />
<text x="3.10" y="836.80" font-size="10.8" fill="#111" textLength="70.60" lengthAdjust="spacingAndGlyphs" stroke="#111" stroke-width="0.3" >For Help, press F1</text>
<text x="983.50" y="836.80" font-size="9.5" fill="#9a9680" textLength="16.50" lengthAdjust="spacingAndGlyphs" >CAP</text>
<text x="1005.00" y="836.80" font-size="9.5" fill="#111" font-weight="bold" textLength="18.00" lengthAdjust="spacingAndGlyphs" stroke="#111" stroke-width="0.3" >NUM</text>
<text x="1027.80" y="836.80" font-size="9.5" fill="#9a9680" textLength="19.00" lengthAdjust="spacingAndGlyphs" >SCRL</text>
<rect x="0.00" y="837.70" width="1050.00" height="2.30" fill="#1048b8" />
<rect x="163.50" y="87.00" width="884.50" height="737.00" fill="#000e78" />
<rect x="1048.00" y="87.00" width="2.00" height="737.00" fill="#b8c8f0" />
<line x1="163.50" y1="87.50" x2="1048.00" y2="87.50" stroke="#000640" stroke-width="1" />
<rect x="169.00" y="147.00" width="874.60" height="617.00" fill="#efefef" />
<defs><pattern id="gd" x="178.580" y="149.880" width="10.430" height="10.425" patternUnits="userSpaceOnUse"><rect x="0" y="0" width="1.25" height="1.25" fill="#4c4c4c"/></pattern></defs>
<rect x="177.20" y="148.50" width="859.26" height="608.65" fill="url(#gd)" />
<rect x="189.63" y="192.20" width="834.40" height="552.53" fill="none" stroke="#1e1e1e" stroke-width="1.3" />
<path d="M200.06 703.03 V202.62 H1013.60 V703.03" stroke="#1e1e1e" stroke-width="1.3" fill="none" />
<line x1="189.63" y1="703.03" x2="1024.03" y2="703.03" stroke="#1e1e1e" stroke-width="1.3" />
<text x="231.35" y="200.43" font-size="7.6" fill="#1e1e1e" font-weight="bold" text-anchor="middle" stroke="#1e1e1e" stroke-width="0.3">0</text>
<line x1="273.07" y1="192.20" x2="273.07" y2="202.62" stroke="#1e1e1e" stroke-width="1.3" />
<text x="314.79" y="200.43" font-size="7.6" fill="#1e1e1e" font-weight="bold" text-anchor="middle" stroke="#1e1e1e" stroke-width="0.3">1</text>
<line x1="356.51" y1="192.20" x2="356.51" y2="202.62" stroke="#1e1e1e" stroke-width="1.3" />
<text x="398.23" y="200.43" font-size="7.6" fill="#1e1e1e" font-weight="bold" text-anchor="middle" stroke="#1e1e1e" stroke-width="0.3">2</text>
<line x1="439.95" y1="192.20" x2="439.95" y2="202.62" stroke="#1e1e1e" stroke-width="1.3" />
<text x="481.67" y="200.43" font-size="7.6" fill="#1e1e1e" font-weight="bold" text-anchor="middle" stroke="#1e1e1e" stroke-width="0.3">3</text>
<line x1="523.39" y1="192.20" x2="523.39" y2="202.62" stroke="#1e1e1e" stroke-width="1.3" />
<text x="565.11" y="200.43" font-size="7.6" fill="#1e1e1e" font-weight="bold" text-anchor="middle" stroke="#1e1e1e" stroke-width="0.3">4</text>
<line x1="606.83" y1="192.20" x2="606.83" y2="202.62" stroke="#1e1e1e" stroke-width="1.3" />
<text x="648.55" y="200.43" font-size="7.6" fill="#1e1e1e" font-weight="bold" text-anchor="middle" stroke="#1e1e1e" stroke-width="0.3">5</text>
<line x1="690.27" y1="192.20" x2="690.27" y2="202.62" stroke="#1e1e1e" stroke-width="1.3" />
<text x="731.99" y="200.43" font-size="7.6" fill="#1e1e1e" font-weight="bold" text-anchor="middle" stroke="#1e1e1e" stroke-width="0.3">6</text>
<line x1="773.71" y1="192.20" x2="773.71" y2="202.62" stroke="#1e1e1e" stroke-width="1.3" />
<text x="815.43" y="200.43" font-size="7.6" fill="#1e1e1e" font-weight="bold" text-anchor="middle" stroke="#1e1e1e" stroke-width="0.3">7</text>
<line x1="857.15" y1="192.20" x2="857.15" y2="202.62" stroke="#1e1e1e" stroke-width="1.3" />
<text x="898.87" y="200.43" font-size="7.6" fill="#1e1e1e" font-weight="bold" text-anchor="middle" stroke="#1e1e1e" stroke-width="0.3">8</text>
<line x1="940.59" y1="192.20" x2="940.59" y2="202.62" stroke="#1e1e1e" stroke-width="1.3" />
<text x="982.31" y="200.43" font-size="7.6" fill="#1e1e1e" font-weight="bold" text-anchor="middle" stroke="#1e1e1e" stroke-width="0.3">9</text>
<circle cx="231.35" cy="213.05" r="0.95" fill="#2a2a2a" />
<circle cx="314.79" cy="213.05" r="0.95" fill="#2a2a2a" />
<circle cx="398.23" cy="213.05" r="0.95" fill="#2a2a2a" />
<circle cx="481.67" cy="213.05" r="0.95" fill="#2a2a2a" />
<circle cx="565.11" cy="213.05" r="0.95" fill="#2a2a2a" />
<circle cx="648.55" cy="213.05" r="0.95" fill="#2a2a2a" />
<circle cx="731.99" cy="213.05" r="0.95" fill="#2a2a2a" />
<circle cx="815.43" cy="213.05" r="0.95" fill="#2a2a2a" />
<circle cx="898.87" cy="213.05" r="0.95" fill="#2a2a2a" />
<circle cx="982.31" cy="213.05" r="0.95" fill="#2a2a2a" />
<text x="194.84" y="247.23" font-size="7.6" fill="#1e1e1e" font-weight="bold" text-anchor="middle" stroke="#1e1e1e" stroke-width="0.3">A</text>
<text x="1018.82" y="247.23" font-size="7.6" fill="#1e1e1e" font-weight="bold" text-anchor="middle" stroke="#1e1e1e" stroke-width="0.3">A</text>
<line x1="189.63" y1="286.03" x2="200.06" y2="286.03" stroke="#1e1e1e" stroke-width="1.3" />
<line x1="1013.60" y1="286.03" x2="1024.03" y2="286.03" stroke="#1e1e1e" stroke-width="1.3" />
<text x="194.84" y="330.62" font-size="7.6" fill="#1e1e1e" font-weight="bold" text-anchor="middle" stroke="#1e1e1e" stroke-width="0.3">B</text>
<text x="1018.82" y="330.62" font-size="7.6" fill="#1e1e1e" font-weight="bold" text-anchor="middle" stroke="#1e1e1e" stroke-width="0.3">B</text>
<line x1="189.63" y1="369.43" x2="200.06" y2="369.43" stroke="#1e1e1e" stroke-width="1.3" />
<line x1="1013.60" y1="369.43" x2="1024.03" y2="369.43" stroke="#1e1e1e" stroke-width="1.3" />
<text x="194.84" y="414.03" font-size="7.6" fill="#1e1e1e" font-weight="bold" text-anchor="middle" stroke="#1e1e1e" stroke-width="0.3">C</text>
<text x="1018.82" y="414.03" font-size="7.6" fill="#1e1e1e" font-weight="bold" text-anchor="middle" stroke="#1e1e1e" stroke-width="0.3">C</text>
<line x1="189.63" y1="452.83" x2="200.06" y2="452.83" stroke="#1e1e1e" stroke-width="1.3" />
<line x1="1013.60" y1="452.83" x2="1024.03" y2="452.83" stroke="#1e1e1e" stroke-width="1.3" />
<text x="194.84" y="497.43" font-size="7.6" fill="#1e1e1e" font-weight="bold" text-anchor="middle" stroke="#1e1e1e" stroke-width="0.3">D</text>
<text x="1018.82" y="497.43" font-size="7.6" fill="#1e1e1e" font-weight="bold" text-anchor="middle" stroke="#1e1e1e" stroke-width="0.3">D</text>
<line x1="189.63" y1="536.23" x2="200.06" y2="536.23" stroke="#1e1e1e" stroke-width="1.3" />
<line x1="1013.60" y1="536.23" x2="1024.03" y2="536.23" stroke="#1e1e1e" stroke-width="1.3" />
<text x="194.84" y="580.83" font-size="7.6" fill="#1e1e1e" font-weight="bold" text-anchor="middle" stroke="#1e1e1e" stroke-width="0.3">E</text>
<text x="1018.82" y="580.83" font-size="7.6" fill="#1e1e1e" font-weight="bold" text-anchor="middle" stroke="#1e1e1e" stroke-width="0.3">E</text>
<line x1="189.63" y1="619.62" x2="200.06" y2="619.62" stroke="#1e1e1e" stroke-width="1.3" />
<line x1="1013.60" y1="619.62" x2="1024.03" y2="619.62" stroke="#1e1e1e" stroke-width="1.3" />
<text x="194.84" y="664.23" font-size="7.6" fill="#1e1e1e" font-weight="bold" text-anchor="middle" stroke="#1e1e1e" stroke-width="0.3">F</text>
<text x="1018.82" y="664.23" font-size="7.6" fill="#1e1e1e" font-weight="bold" text-anchor="middle" stroke="#1e1e1e" stroke-width="0.3">F</text>
<line x1="304.36" y1="703.03" x2="304.36" y2="744.73" stroke="#1e1e1e" stroke-width="1.3" />
<line x1="502.53" y1="703.03" x2="502.53" y2="744.73" stroke="#1e1e1e" stroke-width="1.3" />
<line x1="711.13" y1="703.03" x2="711.13" y2="744.73" stroke="#1e1e1e" stroke-width="1.3" />
<line x1="773.71" y1="703.03" x2="773.71" y2="744.73" stroke="#1e1e1e" stroke-width="1.3" />
<line x1="711.13" y1="723.88" x2="1024.03" y2="723.88" stroke="#1e1e1e" stroke-width="1.3" />
<line x1="909.30" y1="703.03" x2="909.30" y2="744.73" stroke="#1e1e1e" stroke-width="1.3" />
<line x1="966.60" y1="703.03" x2="966.60" y2="744.73" stroke="#1e1e1e" stroke-width="1.3" />
<line x1="872.60" y1="703.03" x2="872.60" y2="723.88" stroke="#1e1e1e" stroke-width="1.3" />
<line x1="836.29" y1="723.88" x2="836.29" y2="744.73" stroke="#1e1e1e" stroke-width="1.3" />
<line x1="225.00" y1="223.48" x2="986.50" y2="223.48" stroke="#1e1e1e" stroke-width="1.15" />
<path d="M220.2 220.78 L226 223.48 L220.2 226.18" stroke="#1e1e1e" stroke-width="1" fill="none" />
<rect x="215.20" y="224.08" width="1.20" height="1.60" fill="#555" />
<text x="228.40" y="221.88" font-size="8.4" fill="#1e1e1e" font-weight="bold" textLength="7.20" lengthAdjust="spacingAndGlyphs" stroke="#1e1e1e" stroke-width="0.3">L1</text>
<path d="M982.6 220.58 L987.5 223.48 L982.6 226.38" stroke="#1e1e1e" stroke-width="1.2" fill="none" />
<text x="988.70" y="226.68" font-size="8.6" fill="#1e1e1e" font-weight="bold" textLength="9.60" lengthAdjust="spacingAndGlyphs" stroke="#1e1e1e" stroke-width="0.3">2.0</text>
<text x="971.50" y="221.78" font-size="8.4" fill="#1e1e1e" font-weight="bold" textLength="7.00" lengthAdjust="spacingAndGlyphs" stroke="#1e1e1e" stroke-width="0.3">L1</text>
<line x1="225.00" y1="233.90" x2="986.50" y2="233.90" stroke="#1e1e1e" stroke-width="1.15" />
<path d="M220.2 231.20 L226 233.90 L220.2 236.60" stroke="#1e1e1e" stroke-width="1" fill="none" />
<rect x="215.20" y="234.50" width="1.20" height="1.60" fill="#555" />
<text x="228.40" y="232.30" font-size="8.4" fill="#1e1e1e" font-weight="bold" textLength="7.20" lengthAdjust="spacingAndGlyphs" stroke="#1e1e1e" stroke-width="0.3">L2</text>
<path d="M982.6 231.00 L987.5 233.90 L982.6 236.80" stroke="#1e1e1e" stroke-width="1.2" fill="none" />
<text x="988.70" y="237.10" font-size="8.6" fill="#1e1e1e" font-weight="bold" textLength="9.60" lengthAdjust="spacingAndGlyphs" stroke="#1e1e1e" stroke-width="0.3">2.0</text>
<text x="971.50" y="232.20" font-size="8.4" fill="#1e1e1e" font-weight="bold" textLength="7.00" lengthAdjust="spacingAndGlyphs" stroke="#1e1e1e" stroke-width="0.3">L2</text>
<line x1="225.00" y1="244.32" x2="986.50" y2="244.32" stroke="#1e1e1e" stroke-width="1.15" />
<path d="M220.2 241.62 L226 244.32 L220.2 247.02" stroke="#1e1e1e" stroke-width="1" fill="none" />
<rect x="215.20" y="244.92" width="1.20" height="1.60" fill="#555" />
<text x="228.40" y="242.72" font-size="8.4" fill="#1e1e1e" font-weight="bold" textLength="7.20" lengthAdjust="spacingAndGlyphs" stroke="#1e1e1e" stroke-width="0.3">L3</text>
<path d="M982.6 241.42 L987.5 244.32 L982.6 247.22" stroke="#1e1e1e" stroke-width="1.2" fill="none" />
<text x="988.70" y="247.52" font-size="8.6" fill="#1e1e1e" font-weight="bold" textLength="9.60" lengthAdjust="spacingAndGlyphs" stroke="#1e1e1e" stroke-width="0.3">2.0</text>
<text x="971.50" y="242.62" font-size="8.4" fill="#1e1e1e" font-weight="bold" textLength="7.00" lengthAdjust="spacingAndGlyphs" stroke="#1e1e1e" stroke-width="0.3">L3</text>
<line x1="225.00" y1="588.35" x2="986.50" y2="588.35" stroke="#1e1e1e" stroke-width="1.15" />
<path d="M220.2 585.65 L226 588.35 L220.2 591.05" stroke="#1e1e1e" stroke-width="1" fill="none" />
<rect x="215.20" y="588.95" width="1.20" height="1.60" fill="#555" />
<text x="228.40" y="586.75" font-size="8.4" fill="#1e1e1e" font-weight="bold" textLength="4.20" lengthAdjust="spacingAndGlyphs" stroke="#1e1e1e" stroke-width="0.3">N</text>
<path d="M982.6 585.45 L987.5 588.35 L982.6 591.25" stroke="#1e1e1e" stroke-width="1.2" fill="none" />
<text x="988.70" y="591.55" font-size="8.6" fill="#1e1e1e" font-weight="bold" textLength="9.60" lengthAdjust="spacingAndGlyphs" stroke="#1e1e1e" stroke-width="0.3">2.0</text>
<text x="973.50" y="586.65" font-size="8.4" fill="#1e1e1e" font-weight="bold" textLength="4.20" lengthAdjust="spacingAndGlyphs" stroke="#1e1e1e" stroke-width="0.3">N</text>
<line x1="225.00" y1="598.78" x2="986.50" y2="598.78" stroke="#1e1e1e" stroke-width="1.15" />
<path d="M220.2 596.08 L226 598.78 L220.2 601.48" stroke="#1e1e1e" stroke-width="1" fill="none" />
<rect x="215.20" y="599.38" width="1.20" height="1.60" fill="#555" />
<text x="228.40" y="597.18" font-size="8.4" fill="#1e1e1e" font-weight="bold" textLength="7.20" lengthAdjust="spacingAndGlyphs" stroke="#1e1e1e" stroke-width="0.3">PE</text>
<path d="M982.6 595.88 L987.5 598.78 L982.6 601.68" stroke="#1e1e1e" stroke-width="1.2" fill="none" />
<text x="988.70" y="601.98" font-size="8.6" fill="#1e1e1e" font-weight="bold" textLength="9.60" lengthAdjust="spacingAndGlyphs" stroke="#1e1e1e" stroke-width="0.3">2.0</text>
<text x="970.60" y="597.48" font-size="7.4" fill="#1e1e1e" font-weight="bold" textLength="6.80" lengthAdjust="spacingAndGlyphs" stroke="#1e1e1e" stroke-width="0.3">PE</text>
<circle cx="387.80" cy="223.48" r="2.40" fill="#1e1e1e" />
<line x1="387.80" y1="223.48" x2="387.80" y2="458.04" stroke="#1e1e1e" stroke-width="1.2999999999999998" />
<line x1="381.20" y1="456.84" x2="387.80" y2="468.46" stroke="#1e1e1e" stroke-width="1.15" />
<line x1="387.80" y1="468.46" x2="387.80" y2="650.90" stroke="#1e1e1e" stroke-width="1.2999999999999998" />
<text transform="translate(385.60,455.84) rotate(-90)" font-size="7.6" fill="#1e1e1e" font-weight="bold" stroke="#1e1e1e" stroke-width="0.3">1</text>
<text transform="translate(385.60,475.28) rotate(-90)" font-size="7.6" fill="#1e1e1e" font-weight="bold" stroke="#1e1e1e" stroke-width="0.3">2</text>
<circle cx="398.23" cy="233.90" r="2.40" fill="#1e1e1e" />
<line x1="398.23" y1="233.90" x2="398.23" y2="458.04" stroke="#1e1e1e" stroke-width="1.2999999999999998" />
<line x1="391.63" y1="456.84" x2="398.23" y2="468.46" stroke="#1e1e1e" stroke-width="1.15" />
<line x1="398.23" y1="468.46" x2="398.23" y2="650.90" stroke="#1e1e1e" stroke-width="1.2999999999999998" />
<text transform="translate(396.03,455.84) rotate(-90)" font-size="7.6" fill="#1e1e1e" font-weight="bold" stroke="#1e1e1e" stroke-width="0.3">3</text>
<text transform="translate(396.03,475.28) rotate(-90)" font-size="7.6" fill="#1e1e1e" font-weight="bold" stroke="#1e1e1e" stroke-width="0.3">4</text>
<circle cx="408.66" cy="244.32" r="2.40" fill="#1e1e1e" />
<line x1="408.66" y1="244.32" x2="408.66" y2="458.04" stroke="#1e1e1e" stroke-width="1.2999999999999998" />
<line x1="402.06" y1="456.84" x2="408.66" y2="468.46" stroke="#1e1e1e" stroke-width="1.15" />
<line x1="408.66" y1="468.46" x2="408.66" y2="650.90" stroke="#1e1e1e" stroke-width="1.2999999999999998" />
<text transform="translate(406.46,455.84) rotate(-90)" font-size="7.6" fill="#1e1e1e" font-weight="bold" stroke="#1e1e1e" stroke-width="0.3">5</text>
<text transform="translate(406.46,475.28) rotate(-90)" font-size="7.6" fill="#1e1e1e" font-weight="bold" stroke="#1e1e1e" stroke-width="0.3">6</text>
<line x1="368.30" y1="463.25" x2="407.50" y2="463.25" stroke="#1e1e1e" stroke-width="1.1" stroke-dasharray="3.6 2.2"/>
<line x1="369.50" y1="460.65" x2="369.50" y2="465.85" stroke="#1e1e1e" stroke-width="1.1" />
<text x="357.20" y="466.15" font-size="8.2" fill="#1e1e1e" font-weight="bold" textLength="7.60" lengthAdjust="spacingAndGlyphs" stroke="#1e1e1e" stroke-width="0.3">Q1</text>
<circle cx="419.09" cy="588.35" r="2.40" fill="#1e1e1e" />
<line x1="419.09" y1="588.35" x2="419.09" y2="650.90" stroke="#1e1e1e" stroke-width="1.2999999999999998" />
<circle cx="429.52" cy="598.78" r="2.40" fill="#1e1e1e" />
<line x1="429.52" y1="598.78" x2="429.52" y2="650.90" stroke="#1e1e1e" stroke-width="1.2999999999999998" />
<circle cx="502.53" cy="598.78" r="2.40" fill="#1e1e1e" />
<circle cx="471.24" cy="223.48" r="2.40" fill="#1e1e1e" />
<line x1="471.24" y1="223.48" x2="471.24" y2="296.45" stroke="#1e1e1e" stroke-width="1.2999999999999998" />
<line x1="464.44" y1="295.05" x2="471.24" y2="307.48" stroke="#1e1e1e" stroke-width="1.15" />
<line x1="471.24" y1="307.50" x2="471.24" y2="317.30" stroke="#1e1e1e" stroke-width="1.2999999999999998" />
<text transform="translate(469.04,294.05) rotate(-90)" font-size="7.6" fill="#1e1e1e" font-weight="bold" stroke="#1e1e1e" stroke-width="0.3">1</text>
<text transform="translate(469.04,345.08) rotate(-90)" font-size="7.6" fill="#1e1e1e" font-weight="bold" stroke="#1e1e1e" stroke-width="0.3">2</text>
<path d="M471.24 317.30 V320.10 H476.44 V325.12 H472.44 L471.24 327.73" stroke="#1e1e1e" stroke-width="1.2" fill="none" />
<path d="M472.04 330.34 L470.24 335.54 M473.24 330.54 L476.84 332.94 L472.64 335.34" stroke="#1e1e1e" stroke-width="0.9" fill="none" />
<line x1="471.24" y1="338.15" x2="471.24" y2="458.04" stroke="#1e1e1e" stroke-width="1.2999999999999998" />
<path d="M471.24 453.64 a2.1 2.2 0 0 0 0 4.4" stroke="#1e1e1e" stroke-width="1" fill="none" />
<line x1="464.44" y1="457.04" x2="471.24" y2="468.86" stroke="#1e1e1e" stroke-width="1.15" />
<line x1="471.24" y1="468.46" x2="471.24" y2="624.84" stroke="#1e1e1e" stroke-width="1.2999999999999998" />
<text transform="translate(469.04,452.63) rotate(-90)" font-size="7.6" fill="#1e1e1e" font-weight="bold" stroke="#1e1e1e" stroke-width="0.3">1</text>
<text transform="translate(469.04,475.48) rotate(-90)" font-size="7.6" fill="#1e1e1e" font-weight="bold" stroke="#1e1e1e" stroke-width="0.3">2</text>
<circle cx="481.67" cy="233.90" r="2.40" fill="#1e1e1e" />
<line x1="481.67" y1="233.90" x2="481.67" y2="296.45" stroke="#1e1e1e" stroke-width="1.2999999999999998" />
<line x1="474.87" y1="295.05" x2="481.67" y2="307.48" stroke="#1e1e1e" stroke-width="1.15" />
<line x1="481.67" y1="307.50" x2="481.67" y2="317.30" stroke="#1e1e1e" stroke-width="1.2999999999999998" />
<text transform="translate(479.47,294.05) rotate(-90)" font-size="7.6" fill="#1e1e1e" font-weight="bold" stroke="#1e1e1e" stroke-width="0.3">3</text>
<text transform="translate(479.47,345.08) rotate(-90)" font-size="7.6" fill="#1e1e1e" font-weight="bold" stroke="#1e1e1e" stroke-width="0.3">4</text>
<path d="M481.67 317.30 V320.10 H486.87 V325.12 H482.87 L481.67 327.73" stroke="#1e1e1e" stroke-width="1.2" fill="none" />
<path d="M482.47 330.34 L480.67 335.54 M483.67 330.54 L487.27 332.94 L483.07 335.34" stroke="#1e1e1e" stroke-width="0.9" fill="none" />
<line x1="481.67" y1="338.15" x2="481.67" y2="458.04" stroke="#1e1e1e" stroke-width="1.2999999999999998" />
<path d="M481.67 453.64 a2.1 2.2 0 0 0 0 4.4" stroke="#1e1e1e" stroke-width="1" fill="none" />
<line x1="474.87" y1="457.04" x2="481.67" y2="468.86" stroke="#1e1e1e" stroke-width="1.15" />
<line x1="481.67" y1="468.46" x2="481.67" y2="624.84" stroke="#1e1e1e" stroke-width="1.2999999999999998" />
<text transform="translate(479.47,452.63) rotate(-90)" font-size="7.6" fill="#1e1e1e" font-weight="bold" stroke="#1e1e1e" stroke-width="0.3">3</text>
<text transform="translate(479.47,475.48) rotate(-90)" font-size="7.6" fill="#1e1e1e" font-weight="bold" stroke="#1e1e1e" stroke-width="0.3">4</text>
<circle cx="492.10" cy="244.32" r="2.40" fill="#1e1e1e" />
<line x1="492.10" y1="244.32" x2="492.10" y2="296.45" stroke="#1e1e1e" stroke-width="1.2999999999999998" />
<line x1="485.30" y1="295.05" x2="492.10" y2="307.48" stroke="#1e1e1e" stroke-width="1.15" />
<line x1="492.10" y1="307.50" x2="492.10" y2="317.30" stroke="#1e1e1e" stroke-width="1.2999999999999998" />
<text transform="translate(489.90,294.05) rotate(-90)" font-size="7.6" fill="#1e1e1e" font-weight="bold" stroke="#1e1e1e" stroke-width="0.3">5</text>
<text transform="translate(489.90,345.08) rotate(-90)" font-size="7.6" fill="#1e1e1e" font-weight="bold" stroke="#1e1e1e" stroke-width="0.3">6</text>
<path d="M492.10 317.30 V320.10 H497.30 V325.12 H493.30 L492.10 327.73" stroke="#1e1e1e" stroke-width="1.2" fill="none" />
<path d="M492.90 330.34 L491.10 335.54 M494.10 330.54 L497.70 332.94 L493.50 335.34" stroke="#1e1e1e" stroke-width="0.9" fill="none" />
<line x1="492.10" y1="338.15" x2="492.10" y2="458.04" stroke="#1e1e1e" stroke-width="1.2999999999999998" />
<path d="M492.10 453.64 a2.1 2.2 0 0 0 0 4.4" stroke="#1e1e1e" stroke-width="1" fill="none" />
<line x1="485.30" y1="457.04" x2="492.10" y2="468.86" stroke="#1e1e1e" stroke-width="1.15" />
<line x1="492.10" y1="468.46" x2="492.10" y2="624.84" stroke="#1e1e1e" stroke-width="1.2999999999999998" />
<text transform="translate(489.90,452.63) rotate(-90)" font-size="7.6" fill="#1e1e1e" font-weight="bold" stroke="#1e1e1e" stroke-width="0.3">5</text>
<text transform="translate(489.90,475.48) rotate(-90)" font-size="7.6" fill="#1e1e1e" font-weight="bold" stroke="#1e1e1e" stroke-width="0.3">6</text>
<rect x="460.81" y="317.30" width="41.72" height="20.85" fill="none" stroke="#1e1e1e" stroke-width="1.35" />
<line x1="460.81" y1="327.73" x2="502.53" y2="327.73" stroke="#1e1e1e" stroke-width="1.35" />
<line x1="429.40" y1="301.66" x2="488.50" y2="301.66" stroke="#1e1e1e" stroke-width="1.1" stroke-dasharray="4 2.4"/>
<line x1="429.40" y1="299.26" x2="429.40" y2="304.06" stroke="#1e1e1e" stroke-width="1.2" />
<rect x="444.70" y="296.16" width="11.00" height="11.00" fill="#efefef" stroke="#1e1e1e" stroke-width="1.3" />
<line x1="450.20" y1="296.16" x2="450.20" y2="307.16" stroke="#1e1e1e" stroke-width="1.1" />
<line x1="444.70" y1="301.66" x2="455.70" y2="301.66" stroke="#1e1e1e" stroke-width="1.1" />
<line x1="450.20" y1="307.16" x2="450.20" y2="332.94" stroke="#1e1e1e" stroke-width="1.1" stroke-dasharray="3.4 2"/>
<line x1="450.20" y1="322.51" x2="460.81" y2="322.51" stroke="#1e1e1e" stroke-width="1.1" stroke-dasharray="3 1.8"/>
<line x1="450.20" y1="332.94" x2="460.81" y2="332.94" stroke="#1e1e1e" stroke-width="1.1" stroke-dasharray="3 1.8"/>
<text x="439.40" y="330.73" font-size="8.2" fill="#1e1e1e" font-weight="bold" textLength="6.80" lengthAdjust="spacingAndGlyphs" stroke="#1e1e1e" stroke-width="0.3">F1</text>
<line x1="466.00" y1="463.25" x2="492.10" y2="463.25" stroke="#1e1e1e" stroke-width="1.1" stroke-dasharray="3.6 2.2"/>
<text x="452.00" y="466.15" font-size="8.2" fill="#1e1e1e" font-weight="bold" textLength="7.40" lengthAdjust="spacingAndGlyphs" stroke="#1e1e1e" stroke-width="0.3">K1</text>
<text x="451.60" y="476.07" font-size="8.2" fill="#1e1e1e" font-weight="bold" textLength="8.40" lengthAdjust="spacingAndGlyphs" stroke="#1e1e1e" stroke-width="0.3">1.5</text>
<circle cx="492.10" cy="421.55" r="2.40" fill="#1e1e1e" />
<circle cx="471.24" cy="504.95" r="2.40" fill="#1e1e1e" />
<path d="M492.10 421.55 H575.54 V458.04" stroke="#1e1e1e" stroke-width="1.15" fill="none" />
<path d="M575.54 453.64 a2.1 2.2 0 0 0 0 4.4" stroke="#1e1e1e" stroke-width="1" fill="none" />
<line x1="568.74" y1="457.04" x2="575.54" y2="468.86" stroke="#1e1e1e" stroke-width="1.15" />
<path d="M575.54 468.46 V504.95 H471.24" stroke="#1e1e1e" stroke-width="1.15" fill="none" />
<text transform="translate(573.34,452.63) rotate(-90)" font-size="7.6" fill="#1e1e1e" font-weight="bold" stroke="#1e1e1e" stroke-width="0.3">5</text>
<text transform="translate(573.34,475.48) rotate(-90)" font-size="7.6" fill="#1e1e1e" font-weight="bold" stroke="#1e1e1e" stroke-width="0.3">6</text>
<circle cx="481.67" cy="431.98" r="2.40" fill="#1e1e1e" />
<circle cx="481.67" cy="494.53" r="2.40" fill="#1e1e1e" />
<path d="M481.67 431.98 H565.11 V458.04" stroke="#1e1e1e" stroke-width="1.15" fill="none" />
<path d="M565.11 453.64 a2.1 2.2 0 0 0 0 4.4" stroke="#1e1e1e" stroke-width="1" fill="none" />
<line x1="558.31" y1="457.04" x2="565.11" y2="468.86" stroke="#1e1e1e" stroke-width="1.15" />
<path d="M565.11 468.46 V494.53 H481.67" stroke="#1e1e1e" stroke-width="1.15" fill="none" />
<text transform="translate(562.91,452.63) rotate(-90)" font-size="7.6" fill="#1e1e1e" font-weight="bold" stroke="#1e1e1e" stroke-width="0.3">3</text>
<text transform="translate(562.91,475.48) rotate(-90)" font-size="7.6" fill="#1e1e1e" font-weight="bold" stroke="#1e1e1e" stroke-width="0.3">4</text>
<circle cx="471.24" cy="442.40" r="2.40" fill="#1e1e1e" />
<circle cx="492.10" cy="484.10" r="2.40" fill="#1e1e1e" />
<path d="M471.24 442.40 H554.68 V458.04" stroke="#1e1e1e" stroke-width="1.15" fill="none" />
<path d="M554.68 453.64 a2.1 2.2 0 0 0 0 4.4" stroke="#1e1e1e" stroke-width="1" fill="none" />
<line x1="547.88" y1="457.04" x2="554.68" y2="468.86" stroke="#1e1e1e" stroke-width="1.15" />
<path d="M554.68 468.46 V484.10 H492.10" stroke="#1e1e1e" stroke-width="1.15" fill="none" />
<text transform="translate(552.48,452.63) rotate(-90)" font-size="7.6" fill="#1e1e1e" font-weight="bold" stroke="#1e1e1e" stroke-width="0.3">1</text>
<text transform="translate(552.48,475.48) rotate(-90)" font-size="7.6" fill="#1e1e1e" font-weight="bold" stroke="#1e1e1e" stroke-width="0.3">2</text>
<line x1="549.50" y1="463.25" x2="575.54" y2="463.25" stroke="#1e1e1e" stroke-width="1.1" stroke-dasharray="3.6 2.2"/>
<text x="534.20" y="466.15" font-size="8.2" fill="#1e1e1e" font-weight="bold" textLength="7.60" lengthAdjust="spacingAndGlyphs" stroke="#1e1e1e" stroke-width="0.3">K2</text>
<text x="534.00" y="476.07" font-size="8.2" fill="#1e1e1e" font-weight="bold" textLength="8.40" lengthAdjust="spacingAndGlyphs" stroke="#1e1e1e" stroke-width="0.3">1.6</text>
<line x1="502.53" y1="598.78" x2="502.53" y2="624.84" stroke="#1e1e1e" stroke-width="1.2999999999999998" />
<circle cx="387.80" cy="624.84" r="1.70" fill="#efefef" stroke="#1e1e1e" stroke-width="1.1" />
<text transform="translate(386.00,622.44) rotate(-90)" font-size="7.4" fill="#1e1e1e" font-weight="bold" textLength="7.80" lengthAdjust="spacingAndGlyphs" stroke="#1e1e1e" stroke-width="0.3">U1</text>
<circle cx="398.23" cy="624.84" r="1.70" fill="#efefef" stroke="#1e1e1e" stroke-width="1.1" />
<text transform="translate(396.43,622.44) rotate(-90)" font-size="7.4" fill="#1e1e1e" font-weight="bold" textLength="7.80" lengthAdjust="spacingAndGlyphs" stroke="#1e1e1e" stroke-width="0.3">V1</text>
<circle cx="408.66" cy="624.84" r="1.70" fill="#efefef" stroke="#1e1e1e" stroke-width="1.1" />
<text transform="translate(406.86,622.44) rotate(-90)" font-size="7.4" fill="#1e1e1e" font-weight="bold" textLength="7.80" lengthAdjust="spacingAndGlyphs" stroke="#1e1e1e" stroke-width="0.3">W1</text>
<circle cx="419.09" cy="624.84" r="1.70" fill="#efefef" stroke="#1e1e1e" stroke-width="1.1" />
<text transform="translate(417.29,622.44) rotate(-90)" font-size="7.4" fill="#1e1e1e" font-weight="bold" textLength="4.00" lengthAdjust="spacingAndGlyphs" stroke="#1e1e1e" stroke-width="0.3">N</text>
<circle cx="429.52" cy="624.84" r="1.70" fill="#efefef" stroke="#1e1e1e" stroke-width="1.1" />
<text transform="translate(427.72,622.44) rotate(-90)" font-size="7.4" fill="#1e1e1e" font-weight="bold" textLength="7.80" lengthAdjust="spacingAndGlyphs" stroke="#1e1e1e" stroke-width="0.3">PE</text>
<text x="371.00" y="627.74" font-size="8.2" fill="#1e1e1e" font-weight="bold" textLength="7.00" lengthAdjust="spacingAndGlyphs" stroke="#1e1e1e" stroke-width="0.3">X1</text>
<circle cx="471.24" cy="624.84" r="1.70" fill="#efefef" stroke="#1e1e1e" stroke-width="1.1" />
<text transform="translate(469.44,622.44) rotate(-90)" font-size="7.4" fill="#1e1e1e" font-weight="bold" textLength="7.80" lengthAdjust="spacingAndGlyphs" stroke="#1e1e1e" stroke-width="0.3">U2</text>
<circle cx="481.67" cy="624.84" r="1.70" fill="#efefef" stroke="#1e1e1e" stroke-width="1.1" />
<text transform="translate(479.87,622.44) rotate(-90)" font-size="7.4" fill="#1e1e1e" font-weight="bold" textLength="7.80" lengthAdjust="spacingAndGlyphs" stroke="#1e1e1e" stroke-width="0.3">V2</text>
<circle cx="492.10" cy="624.84" r="1.70" fill="#efefef" stroke="#1e1e1e" stroke-width="1.1" />
<text transform="translate(490.30,622.44) rotate(-90)" font-size="7.4" fill="#1e1e1e" font-weight="bold" textLength="7.80" lengthAdjust="spacingAndGlyphs" stroke="#1e1e1e" stroke-width="0.3">W2</text>
<circle cx="502.53" cy="624.84" r="1.70" fill="#efefef" stroke="#1e1e1e" stroke-width="1.1" />
<text transform="translate(500.73,622.44) rotate(-90)" font-size="7.4" fill="#1e1e1e" font-weight="bold" textLength="7.80" lengthAdjust="spacingAndGlyphs" stroke="#1e1e1e" stroke-width="0.3">PE</text>
<text x="454.70" y="627.74" font-size="8.2" fill="#1e1e1e" font-weight="bold" textLength="7.00" lengthAdjust="spacingAndGlyphs" stroke="#1e1e1e" stroke-width="0.3">X1</text>
<text transform="translate(391.20,687.50) rotate(-90)" font-size="8" fill="#1e1e1e" font-weight="bold" textLength="32.60" lengthAdjust="spacingAndGlyphs" stroke="#1e1e1e" stroke-width="0.3">SUPPLY:L1</text>
<text transform="translate(401.63,687.50) rotate(-90)" font-size="8" fill="#1e1e1e" font-weight="bold" textLength="32.60" lengthAdjust="spacingAndGlyphs" stroke="#1e1e1e" stroke-width="0.3">SUPPLY:L2</text>
<text transform="translate(412.06,687.50) rotate(-90)" font-size="8" fill="#1e1e1e" font-weight="bold" textLength="32.60" lengthAdjust="spacingAndGlyphs" stroke="#1e1e1e" stroke-width="0.3">SUPPLY:L3</text>
<text transform="translate(422.49,687.50) rotate(-90)" font-size="8" fill="#1e1e1e" font-weight="bold" textLength="32.60" lengthAdjust="spacingAndGlyphs" stroke="#1e1e1e" stroke-width="0.3">SUPPLY: N</text>
<text transform="translate(432.92,687.50) rotate(-90)" font-size="8" fill="#1e1e1e" font-weight="bold" textLength="32.60" lengthAdjust="spacingAndGlyphs" stroke="#1e1e1e" stroke-width="0.3">SUPPLY:PE</text>
<line x1="471.24" y1="624.84" x2="471.24" y2="667.58" stroke="#1e1e1e" stroke-width="1.2999999999999998" />
<line x1="481.67" y1="624.84" x2="481.67" y2="666.54" stroke="#1e1e1e" stroke-width="1.2999999999999998" />
<line x1="492.10" y1="624.84" x2="492.10" y2="667.58" stroke="#1e1e1e" stroke-width="1.2999999999999998" />
<path d="M502.53 624.84 V677.2 H497" stroke="#1e1e1e" stroke-width="1.15" fill="none" />
<line x1="460.30" y1="639.40" x2="513.60" y2="650.80" stroke="#1e1e1e" stroke-width="1" />
<text x="472.44" y="641.00" font-size="7.8" fill="#1e1e1e" font-weight="bold" textLength="3.80" lengthAdjust="spacingAndGlyphs" stroke="#1e1e1e" stroke-width="0.3">1</text>
<text transform="translate(469.44,666.00) rotate(-90)" font-size="7.4" fill="#1e1e1e" font-weight="bold" textLength="8.20" lengthAdjust="spacingAndGlyphs" stroke="#1e1e1e" stroke-width="0.3">U1</text>
<text x="482.87" y="643.20" font-size="7.8" fill="#1e1e1e" font-weight="bold" textLength="3.80" lengthAdjust="spacingAndGlyphs" stroke="#1e1e1e" stroke-width="0.3">2</text>
<text transform="translate(479.87,666.00) rotate(-90)" font-size="7.4" fill="#1e1e1e" font-weight="bold" textLength="8.20" lengthAdjust="spacingAndGlyphs" stroke="#1e1e1e" stroke-width="0.3">V1</text>
<text x="493.30" y="645.40" font-size="7.8" fill="#1e1e1e" font-weight="bold" textLength="3.80" lengthAdjust="spacingAndGlyphs" stroke="#1e1e1e" stroke-width="0.3">3</text>
<text transform="translate(490.30,666.00) rotate(-90)" font-size="7.4" fill="#1e1e1e" font-weight="bold" textLength="8.20" lengthAdjust="spacingAndGlyphs" stroke="#1e1e1e" stroke-width="0.3">W1</text>
<text x="503.73" y="647.60" font-size="7.8" fill="#1e1e1e" font-weight="bold" textLength="3.80" lengthAdjust="spacingAndGlyphs" stroke="#1e1e1e" stroke-width="0.3">4</text>
<text transform="translate(500.73,666.00) rotate(-90)" font-size="7.4" fill="#1e1e1e" font-weight="bold" textLength="8.20" lengthAdjust="spacingAndGlyphs" stroke="#1e1e1e" stroke-width="0.3">PE</text>
<text x="513.60" y="649.30" font-size="8.2" fill="#1e1e1e" font-weight="bold" textLength="7.40" lengthAdjust="spacingAndGlyphs" stroke="#1e1e1e" stroke-width="0.3">W1</text>
<circle cx="481.67" cy="682.18" r="15.60" fill="#efefef" stroke="#1e1e1e" stroke-width="1.2" />
<text x="482.17" y="678.50" font-size="5.6" fill="#1e1e1e" font-weight="bold" text-anchor="middle" stroke="#1e1e1e" stroke-width="0.3">M</text>
<text x="474.60" y="688.40" font-size="7.6" fill="#1e1e1e" font-weight="bold" textLength="3.60" lengthAdjust="spacingAndGlyphs" stroke="#1e1e1e" stroke-width="0.3">3</text>
<path d="M479.3 684.6 q2.4 -3.6 4.8 0 t4.8 0" stroke="#1e1e1e" stroke-width="1" fill="none" />
<text x="454.20" y="685.00" font-size="8.2" fill="#1e1e1e" font-weight="bold" textLength="7.40" lengthAdjust="spacingAndGlyphs" stroke="#1e1e1e" stroke-width="0.3">M1</text>
<rect x="514.00" y="660.50" width="1.30" height="1.80" fill="#444" />
<rect x="514.00" y="670.50" width="1.30" height="1.80" fill="#444" />
<rect x="514.00" y="681.00" width="1.30" height="1.80" fill="#444" />
<circle cx="648.55" cy="244.32" r="2.40" fill="#1e1e1e" />
<circle cx="648.55" cy="588.35" r="2.40" fill="#1e1e1e" />
<line x1="648.55" y1="244.32" x2="648.55" y2="364.21" stroke="#1e1e1e" stroke-width="1.2999999999999998" />
<circle cx="648.55" cy="332.94" r="1.70" fill="#efefef" stroke="#1e1e1e" stroke-width="1.1" />
<text x="630.95" y="335.74" font-size="8.2" fill="#1e1e1e" font-weight="bold" textLength="7.60" lengthAdjust="spacingAndGlyphs" stroke="#1e1e1e" stroke-width="0.3">X2</text>
<text transform="translate(646.35,329.94) rotate(-90)" font-size="7.6" fill="#1e1e1e" font-weight="bold" stroke="#1e1e1e" stroke-width="0.3">1</text>
<line x1="641.35" y1="362.61" x2="648.55" y2="374.64" stroke="#1e1e1e" stroke-width="1.15" />
<line x1="629.05" y1="369.43" x2="645.15" y2="369.43" stroke="#1e1e1e" stroke-width="1.1" stroke-dasharray="3.2 2"/>
<line x1="629.55" y1="367.03" x2="629.55" y2="371.82" stroke="#1e1e1e" stroke-width="1.1" />
<text x="618.05" y="372.32" font-size="8.2" fill="#1e1e1e" font-weight="bold" textLength="7.40" lengthAdjust="spacingAndGlyphs" stroke="#1e1e1e" stroke-width="0.3">S1</text>
<rect x="624.05" y="379.25" width="1.20" height="1.60" fill="#444" />
<text transform="translate(646.35,361.61) rotate(-90)" font-size="7.6" fill="#1e1e1e" font-weight="bold" stroke="#1e1e1e" stroke-width="0.3">3</text>
<text transform="translate(646.35,382.85) rotate(-90)" font-size="7.6" fill="#1e1e1e" font-weight="bold" stroke="#1e1e1e" stroke-width="0.3">4</text>
<line x1="648.55" y1="374.64" x2="648.55" y2="458.04" stroke="#1e1e1e" stroke-width="1.2999999999999998" />
<circle cx="648.55" cy="405.91" r="1.70" fill="#efefef" stroke="#1e1e1e" stroke-width="1.1" />
<text x="630.95" y="408.71" font-size="8.2" fill="#1e1e1e" font-weight="bold" textLength="7.60" lengthAdjust="spacingAndGlyphs" stroke="#1e1e1e" stroke-width="0.3">X2</text>
<text transform="translate(646.35,402.91) rotate(-90)" font-size="7.6" fill="#1e1e1e" font-weight="bold" stroke="#1e1e1e" stroke-width="0.3">2</text>
<path d="M648.55 458.04 h4.2" stroke="#1e1e1e" stroke-width="1.1" fill="none" />
<line x1="652.95" y1="456.44" x2="648.55" y2="468.46" stroke="#1e1e1e" stroke-width="1.15" />
<line x1="648.55" y1="468.46" x2="648.55" y2="541.44" stroke="#1e1e1e" stroke-width="1.2999999999999998" />
<text transform="translate(646.35,456.04) rotate(-90)" font-size="7.6" fill="#1e1e1e" font-weight="bold" textLength="7.40" lengthAdjust="spacingAndGlyphs" stroke="#1e1e1e" stroke-width="0.3">21</text>
<text transform="translate(646.35,479.48) rotate(-90)" font-size="7.6" fill="#1e1e1e" font-weight="bold" textLength="7.40" lengthAdjust="spacingAndGlyphs" stroke="#1e1e1e" stroke-width="0.3">22</text>
<text x="629.05" y="466.15" font-size="8.2" fill="#1e1e1e" font-weight="bold" textLength="7.60" lengthAdjust="spacingAndGlyphs" stroke="#1e1e1e" stroke-width="0.3">K2</text>
<text x="628.75" y="476.07" font-size="8.2" fill="#1e1e1e" font-weight="bold" textLength="8.40" lengthAdjust="spacingAndGlyphs" stroke="#1e1e1e" stroke-width="0.3">1.6</text>
<rect x="637.25" y="541.44" width="22.60" height="10.42" fill="#efefef" stroke="#1e1e1e" stroke-width="1.3" />
<rect x="647.95" y="546.05" width="1.20" height="1.20" fill="#666" />
<line x1="648.55" y1="551.86" x2="648.55" y2="588.35" stroke="#1e1e1e" stroke-width="1.2999999999999998" />
<text x="626.15" y="549.55" font-size="8.2" fill="#1e1e1e" font-weight="bold" textLength="7.40" lengthAdjust="spacingAndGlyphs" stroke="#1e1e1e" stroke-width="0.3">K1</text>
<text transform="translate(646.55,540.24) rotate(-90)" font-size="7.2" fill="#1e1e1e" font-weight="bold" textLength="7.60" lengthAdjust="spacingAndGlyphs" stroke="#1e1e1e" stroke-width="0.3">A1</text>
<text transform="translate(646.55,562.86) rotate(-90)" font-size="7.2" fill="#1e1e1e" font-weight="bold" textLength="7.60" lengthAdjust="spacingAndGlyphs" stroke="#1e1e1e" stroke-width="0.3">A2</text>
<rect x="633.05" y="556.68" width="1.20" height="1.60" fill="#444" />
<circle cx="731.99" cy="244.32" r="2.40" fill="#1e1e1e" />
<circle cx="731.99" cy="588.35" r="2.40" fill="#1e1e1e" />
<line x1="731.99" y1="244.32" x2="731.99" y2="364.21" stroke="#1e1e1e" stroke-width="1.2999999999999998" />
<circle cx="731.99" cy="332.94" r="1.70" fill="#efefef" stroke="#1e1e1e" stroke-width="1.1" />
<text x="714.39" y="335.74" font-size="8.2" fill="#1e1e1e" font-weight="bold" textLength="7.60" lengthAdjust="spacingAndGlyphs" stroke="#1e1e1e" stroke-width="0.3">X2</text>
<text transform="translate(729.79,329.94) rotate(-90)" font-size="7.6" fill="#1e1e1e" font-weight="bold" stroke="#1e1e1e" stroke-width="0.3">3</text>
<line x1="724.79" y1="362.61" x2="731.99" y2="374.64" stroke="#1e1e1e" stroke-width="1.15" />
<line x1="712.49" y1="369.43" x2="728.59" y2="369.43" stroke="#1e1e1e" stroke-width="1.1" stroke-dasharray="3.2 2"/>
<line x1="712.99" y1="367.03" x2="712.99" y2="371.82" stroke="#1e1e1e" stroke-width="1.1" />
<text x="701.49" y="372.32" font-size="8.2" fill="#1e1e1e" font-weight="bold" textLength="7.40" lengthAdjust="spacingAndGlyphs" stroke="#1e1e1e" stroke-width="0.3">S2</text>
<rect x="707.49" y="379.25" width="1.20" height="1.60" fill="#444" />
<text transform="translate(729.79,361.61) rotate(-90)" font-size="7.6" fill="#1e1e1e" font-weight="bold" stroke="#1e1e1e" stroke-width="0.3">3</text>
<text transform="translate(729.79,382.85) rotate(-90)" font-size="7.6" fill="#1e1e1e" font-weight="bold" stroke="#1e1e1e" stroke-width="0.3">4</text>
<line x1="731.99" y1="374.64" x2="731.99" y2="458.04" stroke="#1e1e1e" stroke-width="1.2999999999999998" />
<circle cx="731.99" cy="405.91" r="1.70" fill="#efefef" stroke="#1e1e1e" stroke-width="1.1" />
<text x="714.39" y="408.71" font-size="8.2" fill="#1e1e1e" font-weight="bold" textLength="7.60" lengthAdjust="spacingAndGlyphs" stroke="#1e1e1e" stroke-width="0.3">X2</text>
<text transform="translate(729.79,402.91) rotate(-90)" font-size="7.6" fill="#1e1e1e" font-weight="bold" stroke="#1e1e1e" stroke-width="0.3">4</text>
<path d="M731.99 458.04 h4.2" stroke="#1e1e1e" stroke-width="1.1" fill="none" />
<line x1="736.39" y1="456.44" x2="731.99" y2="468.46" stroke="#1e1e1e" stroke-width="1.15" />
<line x1="731.99" y1="468.46" x2="731.99" y2="541.44" stroke="#1e1e1e" stroke-width="1.2999999999999998" />
<text transform="translate(729.79,456.04) rotate(-90)" font-size="7.6" fill="#1e1e1e" font-weight="bold" textLength="7.40" lengthAdjust="spacingAndGlyphs" stroke="#1e1e1e" stroke-width="0.3">21</text>
<text transform="translate(729.79,479.48) rotate(-90)" font-size="7.6" fill="#1e1e1e" font-weight="bold" textLength="7.40" lengthAdjust="spacingAndGlyphs" stroke="#1e1e1e" stroke-width="0.3">22</text>
<text x="712.49" y="466.15" font-size="8.2" fill="#1e1e1e" font-weight="bold" textLength="7.60" lengthAdjust="spacingAndGlyphs" stroke="#1e1e1e" stroke-width="0.3">K1</text>
<text x="712.19" y="476.07" font-size="8.2" fill="#1e1e1e" font-weight="bold" textLength="8.40" lengthAdjust="spacingAndGlyphs" stroke="#1e1e1e" stroke-width="0.3">1.5</text>
<rect x="720.69" y="541.44" width="22.60" height="10.42" fill="#efefef" stroke="#1e1e1e" stroke-width="1.3" />
<rect x="731.39" y="546.05" width="1.20" height="1.20" fill="#666" />
<line x1="731.99" y1="551.86" x2="731.99" y2="588.35" stroke="#1e1e1e" stroke-width="1.2999999999999998" />
<text x="709.59" y="549.55" font-size="8.2" fill="#1e1e1e" font-weight="bold" textLength="7.40" lengthAdjust="spacingAndGlyphs" stroke="#1e1e1e" stroke-width="0.3">K2</text>
<text transform="translate(729.99,540.24) rotate(-90)" font-size="7.2" fill="#1e1e1e" font-weight="bold" textLength="7.60" lengthAdjust="spacingAndGlyphs" stroke="#1e1e1e" stroke-width="0.3">A1</text>
<text transform="translate(729.99,562.86) rotate(-90)" font-size="7.2" fill="#1e1e1e" font-weight="bold" textLength="7.60" lengthAdjust="spacingAndGlyphs" stroke="#1e1e1e" stroke-width="0.3">A2</text>
<rect x="716.49" y="556.68" width="1.20" height="1.60" fill="#444" />
<circle cx="815.43" cy="244.32" r="2.40" fill="#1e1e1e" />
<circle cx="815.43" cy="588.35" r="2.40" fill="#1e1e1e" />
<line x1="815.43" y1="244.32" x2="815.43" y2="458.04" stroke="#1e1e1e" stroke-width="1.2999999999999998" />
<line x1="809.03" y1="457.44" x2="815.43" y2="468.46" stroke="#1e1e1e" stroke-width="1.15" />
<line x1="815.43" y1="468.46" x2="815.43" y2="588.35" stroke="#1e1e1e" stroke-width="1.2999999999999998" />
<text transform="translate(813.23,456.04) rotate(-90)" font-size="7.6" fill="#1e1e1e" font-weight="bold" textLength="7.40" lengthAdjust="spacingAndGlyphs" stroke="#1e1e1e" stroke-width="0.3">13</text>
<text transform="translate(813.23,479.48) rotate(-90)" font-size="7.6" fill="#1e1e1e" font-weight="bold" textLength="7.40" lengthAdjust="spacingAndGlyphs" stroke="#1e1e1e" stroke-width="0.3">14</text>
<text x="796.13" y="466.15" font-size="8.2" fill="#1e1e1e" font-weight="bold" textLength="7.60" lengthAdjust="spacingAndGlyphs" stroke="#1e1e1e" stroke-width="0.3">K1</text>
<text x="795.83" y="476.07" font-size="8.2" fill="#1e1e1e" font-weight="bold" textLength="8.40" lengthAdjust="spacingAndGlyphs" stroke="#1e1e1e" stroke-width="0.3">1.5</text>
<circle cx="815.43" cy="546.65" r="5.70" fill="#efefef" stroke="#1e1e1e" stroke-width="1.2" />
<line x1="811.43" y1="542.65" x2="819.43" y2="550.65" stroke="#1e1e1e" stroke-width="1" />
<line x1="811.43" y1="550.65" x2="819.43" y2="542.65" stroke="#1e1e1e" stroke-width="1" />
<text x="799.03" y="549.55" font-size="8.2" fill="#1e1e1e" font-weight="bold" textLength="7.20" lengthAdjust="spacingAndGlyphs" stroke="#1e1e1e" stroke-width="0.3">P1</text>
<text transform="translate(813.23,539.84) rotate(-90)" font-size="7.6" fill="#1e1e1e" font-weight="bold" stroke="#1e1e1e" stroke-width="0.3">1</text>
<text transform="translate(813.23,557.86) rotate(-90)" font-size="7.6" fill="#1e1e1e" font-weight="bold" stroke="#1e1e1e" stroke-width="0.3">2</text>
<rect x="804.43" y="556.68" width="1.20" height="1.60" fill="#444" />
<defs><linearGradient id="lg1" x1="0" y1="0" x2="0" y2="1"><stop offset="0" stop-color="#060606"/><stop offset="0.72" stop-color="#0a0606"/><stop offset="0.84" stop-color="#701010"/><stop offset="1" stop-color="#b01818"/></linearGradient><linearGradient id="lg2" x1="0" y1="0" x2="0" y2="1"><stop offset="0" stop-color="#b81c1c"/><stop offset="0.76" stop-color="#c02020"/><stop offset="0.8" stop-color="#181010"/><stop offset="1" stop-color="#0a0808"/></linearGradient></defs>
<rect x="198.50" y="707.20" width="46.50" height="20.60" fill="url(#lg1)" />
<rect x="245.00" y="707.20" width="48.00" height="20.60" fill="url(#lg2)" />
<text x="200.60" y="721.20" font-size="17" fill="#fff" font-weight="bold" textLength="35.50" lengthAdjust="spacingAndGlyphs" >IGE</text>
<text x="253.20" y="721.20" font-size="17" fill="#fff" font-weight="bold" textLength="38.40" lengthAdjust="spacingAndGlyphs" >XAO</text>
<line x1="236.00" y1="715.20" x2="254.00" y2="715.20" stroke="#fff" stroke-width="1.5" />
<line x1="245.00" y1="707.50" x2="245.00" y2="727.50" stroke="#fff" stroke-width="1.2" />
<rect x="246.00" y="723.40" width="46.00" height="1.00" fill="#e8c8c8" opacity="0.7"/>
<line x1="198.50" y1="731.60" x2="274.50" y2="731.60" stroke="#b8b8c4" stroke-width="1.6" stroke-dasharray="2.2 1.6"/>
<line x1="198.50" y1="735.40" x2="258.50" y2="735.40" stroke="#b8b8c4" stroke-width="1.6" stroke-dasharray="2.2 1.6"/>
<line x1="198.50" y1="739.40" x2="250.50" y2="739.40" stroke="#b8b8c4" stroke-width="1.6" stroke-dasharray="2.2 1.6"/>
<text x="312.30" y="717.10" font-size="6.2" fill="#151515" font-weight="bold" textLength="125.40" lengthAdjust="spacing" >SEE Electrical LT Projet Example</text>
<text x="510.90" y="717.10" font-size="6.2" fill="#151515" font-weight="bold" textLength="67.70" lengthAdjust="spacing" >Schema de Circuit</text>
<text x="510.30" y="725.80" font-size="6.2" fill="#151515" font-weight="bold" textLength="23.40" lengthAdjust="spacing" >Entrée</text>
<text x="510.30" y="736.00" font-size="6.2" fill="#151515" font-weight="bold" textLength="61.10" lengthAdjust="spacing" >Moteur inverseur</text>
<rect x="312.30" y="725.40" width="1.60" height="1.20" fill="#333" />
<rect x="312.30" y="735.80" width="1.60" height="1.20" fill="#333" />
<text x="712.30" y="710.40" font-size="6.2" fill="#151515" font-weight="bold" textLength="23.40" lengthAdjust="spacing" >Projet:</text>
<text x="731.00" y="720.00" font-size="6.2" fill="#151515" font-weight="bold" textLength="35.30" lengthAdjust="spacing" >Exemple 1</text>
<text x="712.30" y="731.70" font-size="6.2" fill="#151515" font-weight="bold" textLength="17.40" lengthAdjust="spacing" >Date:</text>
<text x="733.30" y="740.70" font-size="6.2" fill="#151515" font-weight="bold" textLength="32.70" lengthAdjust="spacing" >22-10-00</text>
<text x="775.00" y="710.40" font-size="6.2" fill="#151515" font-weight="bold" textLength="46.00" lengthAdjust="spacing" >No de dessin</text>
<text x="775.00" y="731.70" font-size="6.2" fill="#151515" font-weight="bold" textLength="34.00" lengthAdjust="spacing" >fonction:</text>
<rect x="825.00" y="738.00" width="3.00" height="1.70" fill="#222" />
<text x="838.00" y="731.70" font-size="6.2" fill="#151515" font-weight="bold" textLength="48.00" lengthAdjust="spacing" >Localisation:</text>
<text x="897.50" y="740.90" font-size="6.2" fill="#151515" font-weight="bold" textLength="3.50" lengthAdjust="spacing" >+</text>
<text x="874.00" y="710.40" font-size="6.2" fill="#151515" font-weight="bold" textLength="24.50" lengthAdjust="spacing" >Initials</text>
<text x="912.00" y="710.40" font-size="6.2" fill="#151515" font-weight="bold" textLength="16.00" lengthAdjust="spacing" >Rev.:</text>
<text x="954.50" y="720.00" font-size="6.2" fill="#151515" font-weight="bold" textLength="4.50" lengthAdjust="spacing" >A</text>
<text x="912.00" y="731.70" font-size="6.2" fill="#151515" font-weight="bold" textLength="48.00" lengthAdjust="spacing" >Totale folios</text>
<text x="954.50" y="740.70" font-size="6.2" fill="#151515" font-weight="bold" textLength="4.00" lengthAdjust="spacing" >2</text>
<text x="968.30" y="710.40" font-size="6.2" fill="#151515" font-weight="bold" textLength="19.00" lengthAdjust="spacing" >Folio:</text>
<text x="1007.50" y="720.20" font-size="7.6" fill="#151515" font-weight="bold" textLength="6.50" lengthAdjust="spacingAndGlyphs" >1.</text>
<text x="968.30" y="731.70" font-size="6.2" fill="#151515" font-weight="bold" textLength="56.50" lengthAdjust="spacing" >Prochaine folio</text>
<text x="1011.50" y="740.70" font-size="6.2" fill="#151515" font-weight="bold" textLength="4.00" lengthAdjust="spacing" >2</text>
</g>
</svg>
</body></html>
